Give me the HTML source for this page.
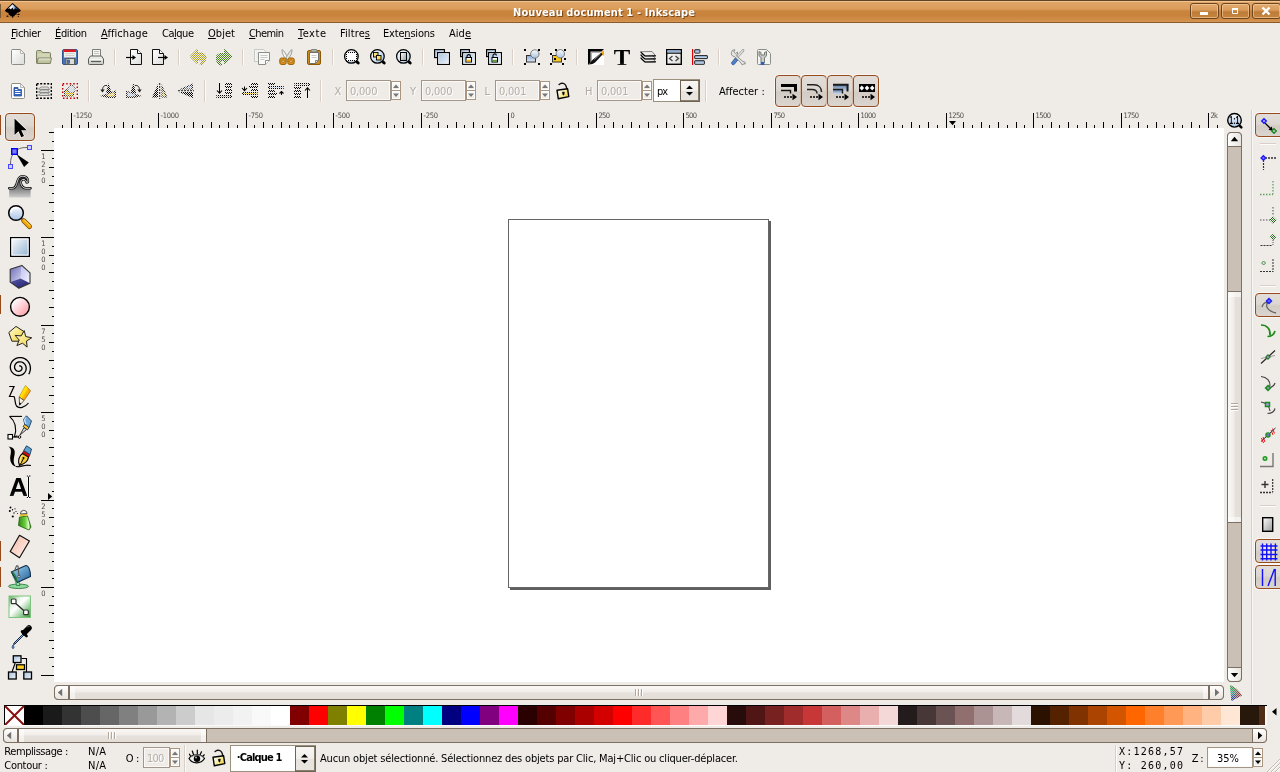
<!DOCTYPE html>
<html lang="fr"><head><meta charset="utf-8"><title>Nouveau document 1 - Inkscape</title>
<style>
html,body{margin:0;padding:0;}
body{width:1280px;height:772px;overflow:hidden;background:#efebe7;position:relative;font-family:"DejaVu Sans Condensed","DejaVu Sans","Liberation Sans",sans-serif;font-stretch:condensed;font-size:11px;}
.b{position:absolute;box-sizing:border-box;display:block;}
.t{position:absolute;white-space:nowrap;}
svg{overflow:visible;}
u{text-decoration:underline;text-underline-offset:1px;}
</style></head><body><div style="will-change:transform;position:absolute;left:0;top:0;width:1280px;height:772px;overflow:hidden">
<svg width="0" height="0" style="position:absolute"><defs>
<linearGradient id="gDoc" x1="0" y1="0" x2="1" y2="1"><stop offset="0" stop-color="#ffffff"/><stop offset="1" stop-color="#dcdcda"/></linearGradient>
<linearGradient id="gBlue" x1="0" y1="0" x2="1" y2="1"><stop offset="0" stop-color="#a9c1de"/><stop offset="1" stop-color="#eef3f9"/></linearGradient>
<linearGradient id="gBlueV" x1="0" y1="0" x2="0" y2="1"><stop offset="0" stop-color="#86a9d6"/><stop offset="1" stop-color="#dfe9f5"/></linearGradient>
<linearGradient id="gLens" x1="0" y1="0" x2="0" y2="1"><stop offset="0" stop-color="#ffffff"/><stop offset=".45" stop-color="#d5e2f2"/><stop offset="1" stop-color="#a9c4e4"/></linearGradient>
<linearGradient id="gYel" x1="0" y1="0" x2="1" y2="1"><stop offset="0" stop-color="#fff6b0"/><stop offset="1" stop-color="#f2c21a"/></linearGradient>
<linearGradient id="gFold" x1="0" y1="0" x2="0" y2="1"><stop offset="0" stop-color="#d6dabd"/><stop offset="1" stop-color="#b5ba93"/></linearGradient>
<linearGradient id="gGrayV" x1="0" y1="0" x2="0" y2="1"><stop offset="0" stop-color="#f2f2f0"/><stop offset="1" stop-color="#c9ccc5"/></linearGradient>
<linearGradient id="gPage" x1="0" y1="0" x2="1" y2="1"><stop offset="0" stop-color="#ffffff"/><stop offset="1" stop-color="#9a9a9a"/></linearGradient>
<linearGradient id="gT" x1="0" y1="0" x2="0" y2="1"><stop offset="0" stop-color="#000"/><stop offset=".7" stop-color="#000"/><stop offset="1" stop-color="#555"/></linearGradient>
<linearGradient id="gLens2" x1="0" y1="0" x2="1" y2="1"><stop offset="0" stop-color="#ffffff"/><stop offset=".5" stop-color="#d5e2f2"/><stop offset="1" stop-color="#a4c0e2"/></linearGradient>
<linearGradient id="gUl" x1="0" y1="0" x2="1" y2=".6"><stop offset="0" stop-color="#fff"/><stop offset=".35" stop-color="#fbf6d0"/><stop offset="1" stop-color="#f2d84a"/></linearGradient>
<pattern id="pChk" width="2" height="2" patternUnits="userSpaceOnUse"><rect x="0" y="0" width="1" height="1" fill="#fff"/><rect x="1" y="1" width="1" height="1" fill="#fff"/></pattern>
<mask id="mChk" maskUnits="userSpaceOnUse" x="0" y="0" width="32" height="32"><rect width="32" height="32" fill="url(#pChk)"/></mask>
</defs></svg>
<div class="b" style="left:0;top:0;width:1280px;height:23px;background:linear-gradient(#5e4425 0px,#5e4425 1px,#f3c490 1px,#f3c490 2px,#e0a566 2px,#dc9d5b 9px,#c9843e 11px,#c8823b 15px,#d2904b 21px,#d89a58 22px,#8a5a2b 22px,#8a5a2b 23px);"></div>
<div class="b" style="left:0px;top:4px;width:1px;height:14px;background:#7a5a35"></div>
<svg class="b" style="left:4px;top:2px" width="18" height="18" viewBox="0 0 18 18"><linearGradient id="gInk" x1="0" y1="0" x2="1" y2="0"><stop offset="0" stop-color="#fff"/><stop offset=".45" stop-color="#e8eef8"/><stop offset=".75" stop-color="#3a5fa0"/><stop offset="1" stop-color="#1a3a7a"/></linearGradient><path d="M8.600 1L16.800 8.300Q16.300 10.300 12.500 10.900Q8.600 11.800 4.800 10.900Q1.300 10.300 1 8.300z" fill="#000"/><path d="M8.600 2.200L3.600 6.900L5.600 6.200L6.900 7.600L8.400 5.600L9.600 7.800L11.200 6.300L14.800 8z" fill="url(#gInk)"/><path d="M4.300 10.500Q8.600 11.600 13 10.500L12.300 12.700H10.900L10.500 14.300H9.600L8.700 16.200L7.700 14.300H6.300L6 12.900H4.900z" fill="#000"/><ellipse cx="3.500" cy="14.200" rx="1.100" ry=".6" fill="#000"/><ellipse cx="14.500" cy="12.400" rx="1.100" ry=".6" fill="#000"/><ellipse cx="14.300" cy="14.500" rx=".6" ry=".6" fill="#000"/></svg>
<span id="t0" class="t" style="left:513px;top:4.69px;font-size:11px;line-height:15px;color:#fff;font-weight:bold;letter-spacing:0.110px;text-shadow:1px 1px 0 #7a4a1c;">Nouveau document 1 - Inkscape</span>
<div class="b" style="left:1190px;top:3px;width:29px;height:16px;border:1px solid #6a4520;border-radius:3px;background:linear-gradient(#e2aa6e 0,#d99c5b 6px,#bd7b38 8px,#c6853f 14px);box-shadow:inset 0 0 0 1px rgba(255,215,170,.55);"></div>
<svg class="b" style="left:1190px;top:3px" width="28" height="16" viewBox="0 0 28 16"><rect x="10" y="9" width="8" height="3" fill="#fff"/></svg>
<div class="b" style="left:1221px;top:3px;width:29px;height:16px;border:1px solid #6a4520;border-radius:3px;background:linear-gradient(#e2aa6e 0,#d99c5b 6px,#bd7b38 8px,#c6853f 14px);box-shadow:inset 0 0 0 1px rgba(255,215,170,.55);"></div>
<svg class="b" style="left:1221px;top:3px" width="28" height="16" viewBox="0 0 28 16"><path d="M11.5 5.5h5v5h-5z" fill="none" stroke="#fff" stroke-width="1"/><rect x="11" y="5" width="6" height="2" fill="#fff"/></svg>
<div class="b" style="left:1252px;top:3px;width:29px;height:16px;border:1px solid #6a4520;border-radius:3px;background:linear-gradient(#e2aa6e 0,#d99c5b 6px,#bd7b38 8px,#c6853f 14px);box-shadow:inset 0 0 0 1px rgba(255,215,170,.55);"></div>
<svg class="b" style="left:1252px;top:3px" width="28" height="16" viewBox="0 0 28 16"><path d="M10.5 4.5l7 7m0-7l-7 7" stroke="#fff" stroke-width="2.4" fill="none"/></svg>
<span id="t1" class="t" style="left:11px;top:25.69px;font-size:11px;line-height:15px;color:#000;letter-spacing:-0.380px;"><u>F</u>ichier</span>
<span id="t2" class="t" style="left:55px;top:25.69px;font-size:11px;line-height:15px;color:#000;letter-spacing:-0.378px;"><u>É</u>dition</span>
<span id="t3" class="t" style="left:101px;top:25.69px;font-size:11px;line-height:15px;color:#000;letter-spacing:0.061px;"><u>A</u>ffichage</span>
<span id="t4" class="t" style="left:162px;top:25.69px;font-size:11px;line-height:15px;color:#000;letter-spacing:-0.478px;">Ca<u>l</u>que</span>
<span id="t5" class="t" style="left:208px;top:25.69px;font-size:11px;line-height:15px;color:#000;letter-spacing:0.047px;"><u>O</u>bjet</span>
<span id="t6" class="t" style="left:249px;top:25.69px;font-size:11px;line-height:15px;color:#000;letter-spacing:-0.591px;"><u>C</u>hemin</span>
<span id="t7" class="t" style="left:298px;top:25.69px;font-size:11px;line-height:15px;color:#000;letter-spacing:0.520px;"><u>T</u>exte</span>
<span id="t8" class="t" style="left:340px;top:25.69px;font-size:11px;line-height:15px;color:#000;letter-spacing:0.109px;">Filtre<u>s</u></span>
<span id="t9" class="t" style="left:383px;top:25.69px;font-size:11px;line-height:15px;color:#000;letter-spacing:-0.194px;">Exte<u>n</u>sions</span>
<span id="t10" class="t" style="left:449px;top:25.69px;font-size:11px;line-height:15px;color:#000;letter-spacing:0.031px;">Aid<u>e</u></span>
<svg class="b" style="left:10px;top:49px" width="16" height="16" viewBox="0 0 16 16"><path d="M2 .5h8.5L14.5 4.5V14.5a1 1 0 0 1-1 1H2.500a1 1 0 0 1-1-1V1.5a1 1 0 0 1 1-1z" fill="url(#gDoc)" stroke="#8b8d88"/><path d="M10.5 .8v3.700h3.700" fill="#f4f4f2" stroke="#a8aaa5" stroke-width=".8"/></svg>
<svg class="b" style="left:36px;top:49px" width="16" height="16" viewBox="0 0 16 16"><path d="M.5 14V2.500a1 1 0 0 1 1-1H5l1.500 2H13.500a1 1 0 0 1 1 1V9" fill="#c3c8a4" stroke="#7f8266"/><path d="M1.500 4.500H13.500V9H1.500z" fill="#d2d6b6"/><path d="M.8 14.500L2.200 9H15.500L14.300 14.500z" fill="url(#gFold)" stroke="#7f8266" stroke-linejoin="round"/><path d="M3 10H14.300" stroke="#e6e9d4" stroke-width=".8"/></svg>
<svg class="b" style="left:62px;top:49px" width="16" height="16" viewBox="0 0 16 16"><rect x=".5" y=".5" width="15" height="15" rx="1.500" fill="#4b74b4" stroke="#2d5290"/><rect x="2" y="1" width="12" height="7.500" fill="#eeeeec"/><rect x="2" y=".5" width="12" height="2.500" fill="#e01b1b"/><path d="M3.500 4.500h9M3.500 6.500h9" stroke="#cfcfcc" stroke-width="1"/><rect x="4" y="9.500" width="8.500" height="6" fill="#dcdcda" stroke="#5a5c58"/><rect x="5.500" y="11" width="2" height="3.500" fill="#4b74b4" stroke="#3a3c3a" stroke-width=".6"/></svg>
<svg class="b" style="left:88px;top:49px" width="16" height="16" viewBox="0 0 16 16"><path d="M4.500 7V.5h8V7" fill="#f6f6f4" stroke="#7b7d78"/><path d="M6 2.500h5M6 4.500h5" stroke="#c3c3c0"/><path d="M2.500 7h11l2 3v4.500a1 1 0 0 1-1 1h-13a1 1 0 0 1-1-1V10z" fill="url(#gGrayV)" stroke="#5b5d58" stroke-linejoin="round"/><path d="M3 12.500h10" stroke="#5b5d58" stroke-width="1.200"/><path d="M1.500 10.500h13" stroke="#fff" stroke-opacity=".8"/></svg>
<div class="b" style="left:114px;top:49px;width:1px;height:16px;background:#d9cfc7"></div>
<div class="b" style="left:115px;top:49px;width:1px;height:16px;background:#fdfcfb"></div>
<svg class="b" style="left:126px;top:49px" width="16" height="16" viewBox="0 0 16 16"><path d="M4.500 .5h7l4 4v11h-11z" fill="url(#gDoc)" stroke="#111" stroke-linejoin="round"/><path d="M11.500 .5v4h4" fill="#fff" stroke="#111" stroke-linejoin="round"/><path d="M0 8.500h7" stroke="#000" stroke-width="1.200"/><path d="M6.500 6v5l3.500-2.500z" fill="#000"/></svg>
<svg class="b" style="left:152px;top:49px" width="16" height="16" viewBox="0 0 16 16"><path d="M.5 .5h7l4 4v11h-11z" fill="url(#gDoc)" stroke="#111" stroke-linejoin="round"/><path d="M7.500 .5v4h4" fill="#fff" stroke="#111" stroke-linejoin="round"/><path d="M6 8.500h7" stroke="#000" stroke-width="1.200"/><path d="M12.500 6v5l3.500-2.500z" fill="#000"/></svg>
<div class="b" style="left:178px;top:49px;width:1px;height:16px;background:#d9cfc7"></div>
<div class="b" style="left:179px;top:49px;width:1px;height:16px;background:#fdfcfb"></div>
<svg class="b" style="left:190px;top:49px" width="16" height="16" viewBox="0 0 16 16"><g mask="url(#mChk)"><path d="M0 7.500L7.500 0V4H12Q16 5 16 8.500Q16 12 12.500 15.500H10Q13 12.500 11 11.200Q10 10.800 7.500 11V15z" fill="#b4a428" stroke="#8c7c14" stroke-width=".8"/></g></svg>
<svg class="b" style="left:216px;top:49px" width="16" height="16" viewBox="0 0 16 16"><g mask="url(#mChk)"><path d="M16 7.500L8.500 .5V4.500H4Q0 5.500 0 9Q0 12.500 3.500 16H6Q3 13 5 11.700Q6 11.300 8.500 11.500V14.500z" fill="#4a8a1a" stroke="#2f5f10" stroke-width=".8"/></g></svg>
<div class="b" style="left:242px;top:49px;width:1px;height:16px;background:#d9cfc7"></div>
<div class="b" style="left:243px;top:49px;width:1px;height:16px;background:#fdfcfb"></div>
<svg class="b" style="left:254px;top:49px" width="16" height="16" viewBox="0 0 16 16"><path d="M.5 .5h9l2 2v10h-11z" fill="#f5f5f3" stroke="#c6c8c3"/><path d="M2.500 3h1M2.500 5h1M2.500 7h1M2.500 9h1" stroke="#d5d5d2"/><path d="M4.500 3.500h11v8l-4 4h-7z" fill="#f9f9f8" stroke="#8b8d88" stroke-linejoin="round"/><path d="M15.500 11.500h-4v4" fill="#fff" stroke="#8b8d88" stroke-linejoin="round"/><path d="M6.500 6.500h7M6.500 8.500h7M6.500 10.500h4" stroke="#c9cac6"/></svg>
<svg class="b" style="left:279px;top:49px" width="16" height="16" viewBox="0 0 16 16"><path d="M3.200 .5C2.500 3.500 4.500 7.500 7.500 10.500L9 9C7.500 5.500 5 2 3.200 .5z" fill="#f2f2f0" stroke="#888a85" stroke-width=".8"/><path d="M12.800 .5C13.500 3.500 11.500 7.500 8.500 10.500L7 9C8.500 5.500 11 2 12.800 .5z" fill="#e6e6e4" stroke="#888a85" stroke-width=".8"/><rect x=".8" y="9" width="6.400" height="6.500" rx="1.800" fill="#d9901a" stroke="#9a5d02"/><rect x="8.800" y="9" width="6.400" height="6.500" rx="1.800" fill="#d9901a" stroke="#9a5d02"/><rect x="3" y="11.200" width="2.200" height="2.200" rx=".6" fill="#f4d9a8" stroke="#9a5d02" stroke-width=".7"/><rect x="10.900" y="11.200" width="2.200" height="2.200" rx=".6" fill="#f4d9a8" stroke="#9a5d02" stroke-width=".7"/></svg>
<svg class="b" style="left:306px;top:49px" width="16" height="16" viewBox="0 0 16 16"><rect x="1.500" y="1.500" width="13" height="14" rx="1.500" fill="#c98a1e" stroke="#8f5902"/><path d="M3.500 3.500h9v8l-3 3h-6z" fill="#fdfdfc" stroke="#6e706b" stroke-linejoin="round"/><path d="M12.500 11.500h-3v3z" fill="#e4e4e2" stroke="#6e706b" stroke-width=".8"/><rect x="5" y=".5" width="6" height="2.500" rx="1" fill="#b5b7b1" stroke="#6e706b" stroke-width=".8"/><path d="M5.500 6.500h5M5.500 8.500h5" stroke="#c4c5c1" stroke-width=".9"/></svg>
<div class="b" style="left:332px;top:49px;width:1px;height:16px;background:#d9cfc7"></div>
<div class="b" style="left:333px;top:49px;width:1px;height:16px;background:#fdfcfb"></div>
<svg class="b" style="left:344px;top:49px" width="16" height="16" viewBox="0 0 16 16"><path d="M13 12.900L14.200 14" stroke="#000" stroke-width="3" stroke-linecap="round"/><circle cx="7.400" cy="7.400" r="6.800" fill="url(#gLens2)" stroke="#000" stroke-width="1.250"/><rect x="2.500" y="3.500" width="10" height="8" fill="#fff"/><path d="M2 3.500h11M2 11.500h11M2.500 3v9M12.500 3v9" fill="none" stroke="#000" stroke-width="1" stroke-dasharray="1 1"/></svg>
<svg class="b" style="left:370px;top:49px" width="16" height="16" viewBox="0 0 16 16"><path d="M13 12.900L14.200 14" stroke="#000" stroke-width="3" stroke-linecap="round"/><circle cx="7.400" cy="7.400" r="6.800" fill="url(#gLens2)" stroke="#000" stroke-width="1.250"/><rect x="3.500" y="3.500" width="4.500" height="4.500" fill="url(#gYel)" stroke="#000" stroke-width=".9"/><rect x="6.500" y="6.500" width="4.500" height="4.500" fill="url(#gYel)" stroke="#000" stroke-width=".9"/></svg>
<svg class="b" style="left:396px;top:49px" width="16" height="16" viewBox="0 0 16 16"><path d="M13 12.900L14.200 14" stroke="#000" stroke-width="3" stroke-linecap="round"/><circle cx="7.400" cy="7.400" r="6.800" fill="url(#gLens2)" stroke="#000" stroke-width="1.250"/><rect x="4.500" y="3.500" width="6" height="8" fill="url(#gPage)" stroke="#000" stroke-width="1"/></svg>
<div class="b" style="left:422px;top:49px;width:1px;height:16px;background:#d9cfc7"></div>
<div class="b" style="left:423px;top:49px;width:1px;height:16px;background:#fdfcfb"></div>
<svg class="b" style="left:434px;top:49px" width="16" height="16" viewBox="0 0 16 16"><rect x=".6" y=".6" width="9.800" height="8" fill="url(#gBlue)" stroke="#000" stroke-width="1.150"/><rect x="3.600" y="3.600" width="11.800" height="11.800" fill="url(#gBlue)" stroke="#000" stroke-width="1.150"/><rect x="4.700" y="4.700" width="9.600" height="9.600" fill="none" stroke="#fff" stroke-opacity=".7" stroke-width=".8"/></svg>
<svg class="b" style="left:460px;top:49px" width="16" height="16" viewBox="0 0 16 16"><rect x=".6" y=".6" width="8.800" height="7" fill="url(#gBlue)" stroke="#000" stroke-width="1.150"/><rect x="2.600" y="3.600" width="12.800" height="11.800" fill="url(#gBlue)" stroke="#000" stroke-width="1.150"/><rect x="3.700" y="4.700" width="10.600" height="9.600" fill="none" stroke="#fff" stroke-opacity=".7" stroke-width=".8"/><path d="M7 8.500V7.300a1.700 1.700 0 0 1 3.400 0V8.500" fill="none" stroke="#000" stroke-width="1.100"/><rect x="6" y="8.500" width="5.500" height="4.500" fill="#fff" stroke="#000" stroke-width="1"/><rect x="6.500" y="10.800" width="4.500" height="1.700" fill="#f5b800"/></svg>
<svg class="b" style="left:486px;top:49px" width="16" height="16" viewBox="0 0 16 16"><rect x=".6" y=".6" width="8.800" height="7" fill="url(#gBlue)" stroke="#000" stroke-width="1.150"/><rect x="2.600" y="3.600" width="12.800" height="11.800" fill="url(#gBlue)" stroke="#000" stroke-width="1.150"/><rect x="3.700" y="4.700" width="10.600" height="9.600" fill="none" stroke="#fff" stroke-opacity=".7" stroke-width=".8"/><path d="M7 8V6.600a1.700 1.700 0 0 1 3.400 0" fill="none" stroke="#000" stroke-width="1.100"/><rect x="6" y="8.500" width="5.500" height="4.500" fill="#fff" stroke="#000" stroke-width="1"/><rect x="6.500" y="10.800" width="4.500" height="1.700" fill="#5aa02c"/></svg>
<div class="b" style="left:512px;top:49px;width:1px;height:16px;background:#d9cfc7"></div>
<div class="b" style="left:513px;top:49px;width:1px;height:16px;background:#fdfcfb"></div>
<svg class="b" style="left:524px;top:49px" width="16" height="16" viewBox="0 0 16 16"><rect x="0" y="0" width="2" height="2" fill="#000"/><rect x="14" y="0" width="2" height="2" fill="#000"/><rect x="0" y="14" width="2" height="2" fill="#000"/><rect x="14" y="14" width="2" height="2" fill="#000"/><rect x="2.500" y="6.500" width="9" height="6.500" fill="url(#gBlueV)" stroke="#333" stroke-width="1"/><circle cx="10.800" cy="5" r="4.200" fill="url(#gLens)" stroke="#777" stroke-width="1"/></svg>
<svg class="b" style="left:550px;top:49px" width="16" height="16" viewBox="0 0 16 16"><rect x="5" y="0" width="2" height="2" fill="#000"/><rect x="14" y="0" width="2" height="2" fill="#000"/><rect x="0" y="4" width="2" height="2" fill="#000"/><rect x="14" y="9" width="2" height="2" fill="#000"/><rect x="0" y="14" width="2" height="2" fill="#000"/><rect x="12" y="14" width="2" height="2" fill="#000"/><rect x="2.500" y="6.500" width="9" height="6.500" fill="#f5c820" stroke="#333" stroke-width="1"/><rect x="4" y="9" width="2" height="2" fill="#000"/><circle cx="10.300" cy="4.800" r="4.200" fill="url(#gLens)" stroke="#777" stroke-width="1"/></svg>
<div class="b" style="left:576px;top:49px;width:1px;height:16px;background:#d9cfc7"></div>
<div class="b" style="left:577px;top:49px;width:1px;height:16px;background:#fdfcfb"></div>
<svg class="b" style="left:588px;top:49px" width="16" height="16" viewBox="0 0 16 16"><rect x="0" y="0" width="16" height="16" fill="#fff"/><path d="M0 0h16l-2.500 2.500h-11v11L0 16z" fill="#000"/><path d="M2.500 2.500h11l-1.500 1.500h-8v8l-1.500 1.500z" fill="#000" fill-opacity=".3"/><path d="M15.800 1L16 6.500 12.500 6z" fill="#f5a300"/><path d="M15.500 1L12 5l1.500 1.500z" fill="#f5a300"/><path d="M13.200 3.800L5 10.500C3 12 2 14 1 15.500 4 15.500 6.500 14.500 8 12.500L14.500 5.500z" fill="#111"/><path d="M12.500 5L6.500 10.500" stroke="#aaa" stroke-width=".8"/></svg>
<svg class="b" style="left:614px;top:49px" width="16" height="16" viewBox="0 0 16 16"><text x="8" y="15.600" font-family="'Liberation Serif','DejaVu Serif',serif" font-weight="bold" font-size="23" text-anchor="middle" fill="url(#gT)" textLength="16.500" lengthAdjust="spacingAndGlyphs">T</text></svg>
<svg class="b" style="left:640px;top:49px" width="16" height="16" viewBox="0 0 16 16"><path d="M.5 8.8L12 8.5L15.700 12.8L5 13z" fill="url(#gDoc)" stroke="#333" stroke-width=".6" stroke-linejoin="round"/><path d="M.8 9.1L5 13L15.700 12.8" fill="none" stroke="#000" stroke-width="1.200" stroke-linejoin="round"/><path d="M.5 5.8L12 5.5L15.700 9.8L5 10z" fill="url(#gDoc)" stroke="#333" stroke-width=".6" stroke-linejoin="round"/><path d="M.8 6.1L5 10L15.700 9.8" fill="none" stroke="#000" stroke-width="1.200" stroke-linejoin="round"/><path d="M.5 2.8L12 2.5L15.700 6.8L5 7z" fill="url(#gDoc)" stroke="#333" stroke-width=".6" stroke-linejoin="round"/><path d="M.8 3.1L5 7L15.700 6.8" fill="none" stroke="#000" stroke-width="1.200" stroke-linejoin="round"/></svg>
<svg class="b" style="left:666px;top:49px" width="16" height="16" viewBox="0 0 16 16"><rect x=".7" y=".7" width="14.600" height="14.600" fill="url(#gDoc)" stroke="#000" stroke-width="1.400"/><rect x="1.500" y="1.500" width="13" height="2" fill="#8db0de"/><path d="M.7 4.200h14.600" stroke="#000" stroke-width="1.100"/><path d="M6.500 7L3.500 9.500l3 2.500M9.500 7l3 2.500-3 2.500" fill="none" stroke="#444" stroke-width="1.300"/></svg>
<svg class="b" style="left:692px;top:49px" width="16" height="16" viewBox="0 0 16 16"><path d="M.6 0v16" stroke="#e00000" stroke-width="1.200"/><rect x="2.700" y=".7" width="5.200" height="3.400" rx=".4" fill="url(#gBlueV)" stroke="#222"/><rect x="2.700" y="6.600" width="12.700" height="3" rx=".4" fill="url(#gBlueV)" stroke="#222"/><rect x="2.700" y="11.700" width="9.700" height="3.600" rx=".4" fill="url(#gBlueV)" stroke="#222"/></svg>
<div class="b" style="left:718px;top:49px;width:1px;height:16px;background:#d9cfc7"></div>
<div class="b" style="left:719px;top:49px;width:1px;height:16px;background:#fdfcfb"></div>
<svg class="b" style="left:730px;top:49px" width="16" height="16" viewBox="0 0 16 16"><path d="M13 1.500L5 10.500" stroke="#8b8d88" stroke-width="2.600" stroke-linecap="round"/><path d="M13 1.500L5 10.500" stroke="#e8e8e6" stroke-width="1.200" stroke-linecap="round"/><path d="M5.500 9L2 13a1.600 1.600 0 0 0 2.400 2.200L7.800 11z" fill="#4f7fc9" stroke="#2c559a" stroke-width=".8"/><path d="M1.500 3.500A3 3 0 0 1 5 .8L3.800 3l1.700 1.500L7.500 3A3 3 0 0 1 6 6.500L13 12.500A2.200 2.200 0 0 1 15.300 15l-1.500-.3-.8 1.200A2.200 2.200 0 0 1 11 13.800L4.500 7.500A3 3 0 0 1 1.500 3.500z" fill="#e6e6e4" stroke="#7b7d78" stroke-width=".8"/></svg>
<svg class="b" style="left:756px;top:49px" width="16" height="16" viewBox="0 0 16 16"><path d="M2.500 .5h8l4 4v10a1 1 0 0 1-1 1h-11a1 1 0 0 1-1-1v-13a1 1 0 0 1 1-1z" fill="#f3f3f1" stroke="#8b8d88"/><path d="M3 2.500V6c0 1.500 1.300 2 2 2.600V13.500h3.500V8.600C9.500 8 10.500 7.500 10.500 6V2.500L8.500 3.500V6H5V3.500z" fill="#c9cbc6" stroke="#6e706b" stroke-width=".9" stroke-linejoin="round"/><rect x="4.700" y="13" width="3.600" height="3" fill="#2f5fb3"/></svg>
<svg class="b" style="left:10px;top:83px" width="16" height="16" viewBox="0 0 16 16"><path d="M2 .5h8.500L14.500 4.500V14.500a1 1 0 0 1-1 1H2.500a1 1 0 0 1-1-1V1.500a1 1 0 0 1 1-1z" fill="#fff" stroke="#8b8d88"/><path d="M10.500 .8v3.700h3.700" fill="#f4f4f2" stroke="#a8aaa5" stroke-width=".8"/><path d="M4 4.500h4v2h3.500v6.500H4z" fill="#3465c0" stroke="#2a50a0" stroke-width=".8"/><path d="M5 6.500h2.500M5 8.500h5.500M5 10.500h5.500" stroke="#fff" stroke-width="1"/></svg>
<svg class="b" style="left:36px;top:83px" width="16" height="16" viewBox="0 0 16 16"><rect x=".7" y=".7" width="14.600" height="14.600" fill="none" stroke="#000" stroke-width="1.400" stroke-dasharray="2 1.500"/><path d="M2.500 12L5 10H12L13.500 12.5H5z" fill="url(#gGrayV)" stroke="#777" stroke-width=".8" stroke-linejoin="round"/><path d="M2.500 9L5 7H12L13.500 9.5H5z" fill="url(#gGrayV)" stroke="#777" stroke-width=".8" stroke-linejoin="round"/><path d="M2.500 6L5 4H12L13.500 6.5H5z" fill="url(#gGrayV)" stroke="#777" stroke-width=".8" stroke-linejoin="round"/></svg>
<svg class="b" style="left:62px;top:83px" width="16" height="16" viewBox="0 0 16 16"><rect x=".7" y=".7" width="14.600" height="14.600" fill="none" stroke="#c00000" stroke-width="1.400" stroke-dasharray="1.500 2"/><g mask="url(#mChk)"><path d="M2.500 13V8l2-1.500 2 1.500h5V13z" fill="#d4aa00" stroke="#222" stroke-width="1"/><circle cx="9.500" cy="6" r="3.800" fill="#c8d4e4" stroke="#555" stroke-width="1"/></g></svg>
<div class="b" style="left:88px;top:80px;width:1px;height:22px;background:#d9cfc7"></div>
<div class="b" style="left:89px;top:80px;width:1px;height:22px;background:#fdfcfb"></div>
<svg class="b" style="left:100px;top:83px" width="16" height="16" viewBox="0 0 16 16"><g mask="url(#mChk)"><path d="M8.500 0L11.500 10H6z" fill="#000"/><path d="M0 13L16 7.500V15H8z" fill="#222"/><path d="M6 12L14.500 9V13.500H9z" fill="#e8c860"/></g><path d="M7 2.500C3.500 2 2.500 4.500 2.500 7.500" fill="none" stroke="#222" stroke-width="1"/><path d="M.3 6.500h4.400L2.500 9.500z" fill="#222"/></svg>
<svg class="b" style="left:126px;top:83px" width="16" height="16" viewBox="0 0 16 16"><g mask="url(#mChk)"><path d="M7.500 0L4.500 10H10z" fill="#000"/><path d="M16 13L0 7.500V15H8z" fill="#222"/><path d="M1.500 9L10 12 7 13.500H1.500z" fill="#b8cce4"/></g><path d="M9 2.500C12.500 2 13.500 4.500 13.500 7.500" fill="none" stroke="#222" stroke-width="1"/><path d="M15.700 6.500h-4.400L13.500 9.500z" fill="#222"/></svg>
<svg class="b" style="left:152px;top:83px" width="16" height="16" viewBox="0 0 16 16"><g mask="url(#mChk)"><path d="M6 1L0 14.500H6z" fill="#000"/><path d="M9.500 1L15.500 14.500H9.500z" fill="#222"/><path d="M10.500 6L13.500 13.500H10.500z" fill="#e8c860"/></g><path d="M7.700 0V16" stroke="#222" stroke-width="1" stroke-dasharray="2 1"/></svg>
<svg class="b" style="left:178px;top:83px" width="16" height="16" viewBox="0 0 16 16"><g mask="url(#mChk)"><path d="M15 .5L1 6.500H15z" fill="#222"/><path d="M13.500 2.500L6 5.500H13.500z" fill="#b8cce4"/><path d="M15 15L1 9H15z" fill="#000"/></g><path d="M0 7.700H16" stroke="#222" stroke-width="1" stroke-dasharray="2 1"/></svg>
<div class="b" style="left:204px;top:80px;width:1px;height:22px;background:#d9cfc7"></div>
<div class="b" style="left:205px;top:80px;width:1px;height:22px;background:#fdfcfb"></div>
<svg class="b" style="left:216px;top:83px" width="16" height="16" viewBox="0 0 16 16"><g mask="url(#mChk)"><rect x="9" y="0" width="7" height="2" fill="#000"/><rect x="9" y="3" width="7" height="2" fill="#000"/><rect x="9" y="6" width="7" height="2" fill="#000"/><rect x="9" y="9" width="7" height="2" fill="#000"/><rect x="0" y="12" width="16" height="3" rx="1.200" fill="#000"/><rect x="1" y="13" width="14" height="1" fill="#d9b43c"/></g><path d="M3.5 0V10.0" stroke="#000" stroke-width="1"/><path d="M1.0 7.5L3.5 10.2L6.0 7.5" fill="none" stroke="#000" stroke-width="1.100"/></svg>
<svg class="b" style="left:242px;top:83px" width="16" height="16" viewBox="0 0 16 16"><g mask="url(#mChk)"><rect x="9" y="0" width="7" height="2" fill="#000"/><rect x="7" y="3" width="9" height="2" fill="#000"/><rect x="9" y="6" width="7" height="2" fill="#000"/><rect x="0" y="9" width="16" height="3" rx="1.200" fill="#000"/><rect x="1" y="10" width="14" height="1" fill="#d9b43c"/><rect x="9" y="13" width="7" height="2" fill="#000"/></g><path d="M2.5 3.5V7.5" stroke="#000" stroke-width="1"/><path d="M0.0 5L2.5 7.7L5.0 5" fill="none" stroke="#000" stroke-width="1.100"/></svg>
<svg class="b" style="left:268px;top:83px" width="16" height="16" viewBox="0 0 16 16"><g mask="url(#mChk)"><rect x="0" y="0" width="7" height="2" fill="#000"/><rect x="0" y="3" width="16" height="3" rx="1.200" fill="#000"/><rect x="1" y="4" width="14" height="1" fill="#c8d4e4"/><rect x="0" y="7" width="7" height="2" fill="#000"/><rect x="0" y="10" width="9" height="2" fill="#000"/><rect x="0" y="13" width="7" height="2" fill="#000"/></g><path d="M11.500 10.500L13.500 8.500L15.500 10.500" fill="none" stroke="#000" stroke-width="1.100"/><path d="M13.500 9v3" stroke="#000"/></svg>
<svg class="b" style="left:294px;top:83px" width="16" height="16" viewBox="0 0 16 16"><g mask="url(#mChk)"><rect x="0" y="0" width="16" height="3" rx="1.200" fill="#000"/><rect x="1" y="1" width="14" height="1" fill="#c8d4e4"/><rect x="0" y="4" width="7" height="2" fill="#000"/><rect x="0" y="7" width="7" height="2" fill="#000"/><rect x="0" y="10" width="7" height="2" fill="#000"/><rect x="0" y="13" width="7" height="2" fill="#000"/></g><path d="M13.5 5.0V15" stroke="#000" stroke-width="1"/><path d="M11.0 7.5L13.5 4.8L16.0 7.5" fill="none" stroke="#000" stroke-width="1.100"/></svg>
<div class="b" style="left:320px;top:80px;width:1px;height:22px;background:#d9cfc7"></div>
<div class="b" style="left:321px;top:80px;width:1px;height:22px;background:#fdfcfb"></div>
<span id="t11" class="t" style="left:334.5px;top:83.69px;font-size:11px;line-height:15px;color:#b0aaa3;letter-spacing:0.000px;text-shadow:1px 1px 0 #fff;">X</span>
<div class="b" style="left:346px;top:80px;width:45px;height:21px;border:1px solid #a0978a;background:#efebe7;box-shadow:inset 0 0 0 1px #fbfaf8;"></div>
<span id="t12" class="t" style="left:350px;top:83.69px;font-size:11px;line-height:15px;color:#b5afa8;letter-spacing:-0.207px;text-shadow:1px 1px 0 #fff;">0,000</span>
<div class="b" style="left:391px;top:81px;width:10px;height:10px;border:1px solid #ab957f;background:linear-gradient(#fdfcfb,#ece8e3);box-shadow:inset 0 0 0 1px #fff;"></div>
<div class="b" style="left:391px;top:90px;width:10px;height:10px;border:1px solid #ab957f;background:linear-gradient(#fdfcfb,#ece8e3);box-shadow:inset 0 0 0 1px #fff;"></div>
<svg class="b" style="left:391px;top:81px" width="10" height="19" viewBox="0 0 10 19"><path d="M2 7L5 3.5L8 7z M2 12.5L5 16L8 12.5z" fill="#777"/></svg>
<span id="t13" class="t" style="left:410px;top:83.69px;font-size:11px;line-height:15px;color:#b0aaa3;letter-spacing:0.000px;text-shadow:1px 1px 0 #fff;">Y</span>
<div class="b" style="left:421px;top:80px;width:45px;height:21px;border:1px solid #a0978a;background:#efebe7;box-shadow:inset 0 0 0 1px #fbfaf8;"></div>
<span id="t14" class="t" style="left:425px;top:83.69px;font-size:11px;line-height:15px;color:#b5afa8;letter-spacing:-0.207px;text-shadow:1px 1px 0 #fff;">0,000</span>
<div class="b" style="left:466px;top:81px;width:10px;height:10px;border:1px solid #ab957f;background:linear-gradient(#fdfcfb,#ece8e3);box-shadow:inset 0 0 0 1px #fff;"></div>
<div class="b" style="left:466px;top:90px;width:10px;height:10px;border:1px solid #ab957f;background:linear-gradient(#fdfcfb,#ece8e3);box-shadow:inset 0 0 0 1px #fff;"></div>
<svg class="b" style="left:466px;top:81px" width="10" height="19" viewBox="0 0 10 19"><path d="M2 7L5 3.5L8 7z M2 12.5L5 16L8 12.5z" fill="#777"/></svg>
<span id="t15" class="t" style="left:484.5px;top:83.69px;font-size:11px;line-height:15px;color:#b0aaa3;letter-spacing:0.000px;text-shadow:1px 1px 0 #fff;">L</span>
<div class="b" style="left:495px;top:80px;width:45px;height:21px;border:1px solid #a0978a;background:#efebe7;box-shadow:inset 0 0 0 1px #fbfaf8;"></div>
<span id="t16" class="t" style="left:499px;top:83.69px;font-size:11px;line-height:15px;color:#b5afa8;letter-spacing:-0.207px;text-shadow:1px 1px 0 #fff;">0,001</span>
<div class="b" style="left:540px;top:81px;width:10px;height:10px;border:1px solid #ab957f;background:linear-gradient(#fdfcfb,#ece8e3);box-shadow:inset 0 0 0 1px #fff;"></div>
<div class="b" style="left:540px;top:90px;width:10px;height:10px;border:1px solid #ab957f;background:linear-gradient(#fdfcfb,#ece8e3);box-shadow:inset 0 0 0 1px #fff;"></div>
<svg class="b" style="left:540px;top:81px" width="10" height="19" viewBox="0 0 10 19"><path d="M2 7L5 3.5L8 7z M2 12.5L5 16L8 12.5z" fill="#777"/></svg>
<span id="t17" class="t" style="left:585px;top:83.69px;font-size:11px;line-height:15px;color:#b0aaa3;letter-spacing:0.000px;text-shadow:1px 1px 0 #fff;">H</span>
<div class="b" style="left:597px;top:80px;width:45px;height:21px;border:1px solid #a0978a;background:#efebe7;box-shadow:inset 0 0 0 1px #fbfaf8;"></div>
<span id="t18" class="t" style="left:601px;top:83.69px;font-size:11px;line-height:15px;color:#b5afa8;letter-spacing:-0.207px;text-shadow:1px 1px 0 #fff;">0,001</span>
<div class="b" style="left:642px;top:81px;width:10px;height:10px;border:1px solid #ab957f;background:linear-gradient(#fdfcfb,#ece8e3);box-shadow:inset 0 0 0 1px #fff;"></div>
<div class="b" style="left:642px;top:90px;width:10px;height:10px;border:1px solid #ab957f;background:linear-gradient(#fdfcfb,#ece8e3);box-shadow:inset 0 0 0 1px #fff;"></div>
<svg class="b" style="left:642px;top:81px" width="10" height="19" viewBox="0 0 10 19"><path d="M2 7L5 3.5L8 7z M2 12.5L5 16L8 12.5z" fill="#777"/></svg>
<svg class="b" style="left:555px;top:83px" width="16" height="16" viewBox="0 0 16 16"><path d="M4 1.600C6 -.6 10.800 -.8 11.800 5.800" fill="none" stroke="#111" stroke-width="1.400" stroke-linecap="round"/><path d="M2 7.200L12.600 5.800L13.800 13.600L3.300 15.800z" fill="url(#gUl)" stroke="#000" stroke-width="1.400" stroke-linejoin="round"/><path d="M7.300 9.300L9.300 9L8.900 12L8 11.800z" fill="#000" stroke="#000" stroke-width=".6"/></svg>
<div class="b" style="left:653px;top:79px;width:47px;height:23px;border:1px solid #9a917f;background:#fff;"></div>
<div class="b" style="left:680px;top:80px;width:20px;height:22px;border:1px solid #6f6453;box-shadow:inset -1px -1px 0 #8a7f6e;background:linear-gradient(#f8f6f3,#f1eeea 50%,#e8e3dd 52%,#e9e5df);"></div>
<svg class="b" style="left:680px;top:80px" width="20" height="22" viewBox="0 0 20 22"><path d="M6 9l3.500-3.500L13 9z M6 12l3.500 3.500L13 12z" fill="#000"/></svg>
<span id="t19" class="t" style="left:657px;top:83.69px;font-size:11px;line-height:15px;color:#000;letter-spacing:-1.141px;">px</span>
<div class="b" style="left:705px;top:80px;width:1px;height:22px;background:#d9cfc7"></div>
<div class="b" style="left:706px;top:80px;width:1px;height:22px;background:#fdfcfb"></div>
<span id="t20" class="t" style="left:719px;top:83.69px;font-size:11px;line-height:15px;color:#000;letter-spacing:0.040px;">Affecter :</span>
<div class="b" style="left:775px;top:75px;width:26px;height:32px;border:1px solid #964b1c;border-radius:4px;background:linear-gradient(#e2ddd8 0%,#ddd7d1 45%,#d3ccc5 55%,#dbd5cf 100%);box-shadow:0 0 0 1px rgba(255,255,255,.6);"></div>
<svg class="b" style="left:780px;top:83px" width="18" height="18" viewBox="0 0 18 18"><path d="M1 2.500H15.500V8.500" fill="none" stroke="#000" stroke-width="3"/><path d="M1 7.500H10.500V10.500" fill="none" stroke="#111" stroke-width="1.400"/><path d="M4 14H13" stroke="#000" stroke-width="1.300" stroke-dasharray="2 1"/><path d="M12.500 10.8L17 14L12.500 17.2z" fill="#000"/></svg>
<div class="b" style="left:801px;top:75px;width:26px;height:32px;border:1px solid #964b1c;border-radius:4px;background:linear-gradient(#e2ddd8 0%,#ddd7d1 45%,#d3ccc5 55%,#dbd5cf 100%);box-shadow:0 0 0 1px rgba(255,255,255,.6);"></div>
<svg class="b" style="left:806px;top:83px" width="18" height="18" viewBox="0 0 18 18"><path d="M1 1.800H8C13 1.800 15.500 5 15.500 9" fill="none" stroke="#222" stroke-width="1.500"/><path d="M1 6.500H6C9.500 6.500 11 8.500 11 10.500" fill="none" stroke="#222" stroke-width="1.500"/><path d="M4 14H13" stroke="#000" stroke-width="1.300" stroke-dasharray="2 1"/><path d="M12.500 10.8L17 14L12.500 17.2z" fill="#000"/></svg>
<div class="b" style="left:827px;top:75px;width:26px;height:32px;border:1px solid #964b1c;border-radius:4px;background:linear-gradient(#e2ddd8 0%,#ddd7d1 45%,#d3ccc5 55%,#dbd5cf 100%);box-shadow:0 0 0 1px rgba(255,255,255,.6);"></div>
<svg class="b" style="left:832px;top:83px" width="18" height="18" viewBox="0 0 18 18"><linearGradient id="gA3" x1="0" y1="0" x2="0" y2="1"><stop offset="0" stop-color="#4d6f9e"/><stop offset="1" stop-color="#cddcee"/></linearGradient><rect x="1" y="1" width="15.500" height="7.500" fill="url(#gA3)"/><rect x="1" y="6" width="9" height="5" fill="url(#gA3)"/><path d="M1 1.800H15.500V8.500" fill="none" stroke="#1a1a1a" stroke-width="2"/><path d="M1 6.500H10.500V10.500" fill="none" stroke="#1a1a1a" stroke-width="1.400"/><path d="M4 14H13" stroke="#000" stroke-width="1.300" stroke-dasharray="2 1"/><path d="M12.500 10.8L17 14L12.500 17.2z" fill="#000"/></svg>
<div class="b" style="left:853px;top:75px;width:26px;height:32px;border:1px solid #964b1c;border-radius:4px;background:linear-gradient(#e2ddd8 0%,#ddd7d1 45%,#d3ccc5 55%,#dbd5cf 100%);box-shadow:0 0 0 1px rgba(255,255,255,.6);"></div>
<svg class="b" style="left:858px;top:83px" width="18" height="18" viewBox="0 0 18 18"><rect x="1" y="1" width="16" height="8" fill="#000"/><path d="M1.5 5l2.300-2.500 2.300 2.500-2.300 2.500z" fill="#fff"/><path d="M6.7 5l2.300-2.500 2.300 2.500-2.300 2.500z" fill="#fff"/><path d="M11.9 5l2.300-2.500 2.300 2.500-2.300 2.500z" fill="#fff"/><path d="M4 14H13" stroke="#000" stroke-width="1.300" stroke-dasharray="2 1"/><path d="M12.500 10.8L17 14L12.500 17.2z" fill="#000"/></svg>
<div class="b" style="left:5px;top:113px;width:30px;height:28px;border:1px solid #964b1c;border-radius:4px;background:linear-gradient(#e2ddd8 0%,#ddd7d1 45%,#d3ccc5 55%,#dbd5cf 100%);box-shadow:0 0 0 1px rgba(255,255,255,.6);"></div>
<svg class="b" style="left:7px;top:115px" width="24" height="24" viewBox="0 0 24 24"><path d="M7.500 3.500V20L11.500 16.200L14.300 22.300L17 21L14.200 15.200H19.800z" fill="#000" stroke="#fff" stroke-width="1.200" stroke-linejoin="round"/><path d="M7.500 3.500V20L11.500 16.200L14.300 22.300L17 21L14.200 15.200H19.800z" fill="#000"/></svg>
<svg class="b" style="left:7px;top:145px" width="24" height="24" viewBox="0 0 24 24"><path d="M3.500 19C3.500 14 4.500 11 6 9.500M10.500 4.500C13 3 16 2.500 20 2.500" fill="none" stroke="#666" stroke-width="1"/><rect x="4.700" y="3.700" width="5.600" height="5.600" fill="#7b7be6" stroke="#0000ff" stroke-width="1.400"/><rect x="20.500" y=".5" width="4" height="4" fill="#d0d0ff" stroke="#4848ff"/><rect x="1.500" y="19.500" width="4" height="4" fill="#d0d0ff" stroke="#4848ff"/><path d="M9.600 9.200L21.800 17.400L17.100 22z" fill="#000"/></svg>
<svg class="b" style="left:7px;top:175px" width="24" height="24" viewBox="0 0 24 24"><linearGradient id="gTw" x1="0" y1="0" x2="0" y2="1"><stop offset="0" stop-color="#333"/><stop offset=".55" stop-color="#7c7c7c"/><stop offset="1" stop-color="#cfcfcf"/></linearGradient><path d="M2.200 13.300H5.500C9 13.300 9.500 9 10.500 6C11.500 2.500 13 1.200 16 1.200C19 1.200 21 3.500 21 6C21 7.500 20.300 7.800 19.600 7.400C19.500 5.500 17.500 4 15.500 4.500C13.500 5.200 13.500 7.500 14 9C14.800 11.500 16 13.300 19 13.300H23.600V22.600H2.200z" fill="url(#gTw)"/><path d="M2.200 13.300H5.500C9 13.300 9.500 9 10.500 6C11.500 2.500 13 1.200 16 1.200C19 1.200 21 3.500 21 6C21 7.500 20.300 7.800 19.600 7.400C19.500 5.500 17.500 4 15.500 4.500C13.500 5.200 13.500 7.500 14 9C14.800 11.500 16 13.300 19 13.300H23.600" fill="none" stroke="#111" stroke-width="2.400" stroke-linecap="round"/><path d="M2.200 13.300H5.500C9 13.300 9.500 9 10.500 6C11.500 2.500 13 1.200 16 1.200C19 1.200 21 3.500 21 6C21 7.500 20.300 7.800 19.600 7.400C19.500 5.500 17.500 4 15.500 4.500C13.500 5.200 13.500 7.500 14 9C14.800 11.500 16 13.300 19 13.300H23.600" fill="none" stroke="#fff" stroke-width=".8"/></svg>
<svg class="b" style="left:7px;top:205px" width="24" height="24" viewBox="0 0 24 24"><linearGradient id="gZh" x1="0" y1="0" x2="1" y2="0"><stop offset="0" stop-color="#ffd24a"/><stop offset="1" stop-color="#e89200"/></linearGradient><path d="M14.500 13.500L17 16" stroke="#888" stroke-width="3.200"/><path d="M16.800 15.800L22.500 21.500" stroke="#7a4a00" stroke-width="5" stroke-linecap="round"/><path d="M16.800 15.800L22.500 21.500" stroke="#f5a800" stroke-width="3.400" stroke-linecap="round"/><path d="M17.300 15L23 20.700" stroke="#ffe27a" stroke-width="1" stroke-linecap="round"/><circle cx="9" cy="8" r="7.300" fill="url(#gLens)" stroke="#000" stroke-width="1.500"/><path d="M4 7A5 5 0 0 1 10 3" fill="none" stroke="#fff" stroke-width="1.500" stroke-linecap="round"/></svg>
<svg class="b" style="left:7px;top:235px" width="24" height="24" viewBox="0 0 24 24"><rect x="3.700" y="2.700" width="18.600" height="18.600" fill="url(#gRc)" stroke="#000" stroke-width="1.400"/><rect x="4.900" y="3.900" width="16.200" height="16.200" fill="none" stroke="#fff" stroke-width="1"/><linearGradient id="gRc" x1="0" y1="0" x2="1" y2="1"><stop offset="0" stop-color="#fff"/><stop offset="1" stop-color="#8fb0cf"/></linearGradient></svg>
<svg class="b" style="left:7px;top:265px" width="24" height="24" viewBox="0 0 24 24"><linearGradient id="gB1" x1="0" y1="0" x2="1" y2="1"><stop offset="0" stop-color="#6a6ab8"/><stop offset="1" stop-color="#d4d4f0"/></linearGradient><linearGradient id="gB2" x1="0" y1="0" x2="1" y2="1"><stop offset="0" stop-color="#c0c0ee"/><stop offset="1" stop-color="#f4f4ff"/></linearGradient><linearGradient id="gB3" x1="0" y1="0" x2="1" y2="1"><stop offset="0" stop-color="#5a5aaa"/><stop offset="1" stop-color="#1c1c6c"/></linearGradient><path d="M3.200 4.300L14.800 .4L13.600 13.600L3.200 17.100z" fill="url(#gB1)"/><path d="M14.800 .4L23 7.800V18.300L13.600 13.600z" fill="url(#gB2)"/><path d="M3.200 17.100L13.600 13.600L23 18.300L11.900 23.200z" fill="url(#gB3)"/><path d="M3.200 4.300L14.800 .4L23 7.800V18.300L11.900 23.200L3.200 17.100z" fill="none" stroke="#333" stroke-width="1.100" stroke-linejoin="round"/></svg>
<svg class="b" style="left:7px;top:295px" width="24" height="24" viewBox="0 0 24 24"><linearGradient id="gEl" x1="0.150" y1="0.150" x2=".85" y2=".85"><stop offset="0" stop-color="#fff"/><stop offset="1" stop-color="#ffa4ae"/></linearGradient><circle cx="13" cy="11.800" r="9.400" fill="url(#gEl)" stroke="#000" stroke-width="1.400"/></svg>
<svg class="b" style="left:7px;top:325px" width="24" height="24" viewBox="0 0 24 24"><linearGradient id="gSt" x1="0" y1="0" x2="1" y2="1"><stop offset="0" stop-color="#fffde0"/><stop offset="1" stop-color="#f0d030"/></linearGradient><path d="M9 1.400L1.800 7.500L4.900 16.200H14L16.600 6.300z" fill="url(#gSt)" stroke="#222" stroke-width="1" stroke-linejoin="round"/><path d="M17.2 5.6L18.7 11.5L24.7 12.8L19.5 16.0L20.1 22.1L15.5 18.2L9.9 20.6L12.2 15.0L8.1 10.4L14.2 10.9z" fill="url(#gSt)" stroke="#222" stroke-width="1" stroke-linejoin="round"/></svg>
<svg class="b" style="left:7px;top:355px" width="24" height="24" viewBox="0 0 24 24"><path d="M12.3 11.1L12.5 11.0L12.7 11.0L12.9 11.0L13.1 11.0L13.4 11.0L13.6 11.1L13.9 11.2L14.1 11.4L14.3 11.6L14.5 11.8L14.7 12.0L14.8 12.3L14.9 12.6L14.9 13.0L15.0 13.3L14.9 13.7L14.9 14.0L14.7 14.4L14.6 14.7L14.3 15.0L14.1 15.3L13.8 15.6L13.4 15.8L13.0 16.0L12.6 16.2L12.2 16.3L11.7 16.3L11.2 16.3L10.7 16.2L10.3 16.0L9.8 15.8L9.4 15.6L9.0 15.2L8.6 14.9L8.3 14.4L8.0 13.9L7.8 13.4L7.6 12.9L7.6 12.3L7.6 11.7L7.6 11.1L7.8 10.5L8.0 9.9L8.3 9.3L8.7 8.8L9.1 8.3L9.6 7.9L10.2 7.5L10.8 7.2L11.5 7.0L12.2 6.9L12.9 6.8L13.6 6.8L14.3 7.0L15.0 7.2L15.7 7.5L16.4 7.9L17.0 8.4L17.6 8.9L18.0 9.5L18.4 10.2L18.8 11.0L19.0 11.8L19.1 12.6L19.2 13.5L19.1 14.3L18.9 15.2L18.6 16.0L18.2 16.8L17.7 17.6L17.1 18.2L16.4 18.9L15.7 19.4L14.8 19.8L13.9 20.2L13.0 20.4L12.0 20.5L11.1 20.5L10.1 20.4L9.1 20.1L8.2 19.7L7.3 19.2L6.4 18.6L5.7 17.9L5.0 17.1L4.4 16.2L4.0 15.3L3.6 14.2L3.4 13.2L3.3 12.1L3.4 10.9L3.6 9.8L3.9 8.7L4.4 7.7L5.0 6.7L5.7 5.8L6.5 5.0L7.5 4.2L8.5 3.6L9.6 3.1L10.8 2.8L12.0 2.6L13.2 2.6L14.4 2.7L15.7 2.9L16.9 3.3L18.0 3.9L19.1 4.6L20.1 5.4L21.0 6.4L21.8 7.5L22.4 8.6L22.9 9.9L23.2 11.2L23.4 12.6L23.4 13.9L23.2 15.3L22.9 16.6L22.4 18.0L21.7 19.2" fill="none" stroke="#000" stroke-width="1.300"/></svg>
<svg class="b" style="left:7px;top:385px" width="24" height="24" viewBox="0 0 24 24"><path d="M2.200 1.500H7L2.500 11.500H7C8.500 14 7.500 18 9.500 21C12 24 18 22.500 21.500 18" fill="none" stroke="#000" stroke-width="1.200"/><path d="M18.500 .6L23.600 5.800L17 15.500L12.200 12z" fill="#ffb000" stroke="#6a4a00" stroke-width=".6"/><path d="M18.500 .6L21 3.200L14.600 13.700L12.200 12z" fill="#ffe000"/><path d="M12.200 12L17 15.500L12.600 20.200z" fill="#fff4dc" stroke="#333" stroke-width=".8"/><path d="M12.300 17.300L14.200 18.600L12.500 20.500z" fill="#000"/></svg>
<svg class="b" style="left:7px;top:415px" width="24" height="24" viewBox="0 0 24 24"><path d="M2.600 1.400H15" stroke="#000" stroke-width="1.100"/><path d="M2.600 1.400C9 7 9.500 15 7.500 21.500C8.500 22 9.500 21.500 10.200 20.500" fill="none" stroke="#000" stroke-width="1.100"/><path d="M5 22H12" stroke="#000" stroke-width="1.100"/><rect x="1" y="19.500" width="4.500" height="4.500" fill="#fff" stroke="#000" stroke-width="1.100"/><circle cx="12.500" cy="22" r="1.300" fill="#fff" stroke="#000" stroke-width="1"/><path d="M13 20L17 12.500L19.500 14.500z" fill="#ddd" stroke="#222" stroke-width=".9"/><path d="M16.200 11.500L20.500 14.800L22 12.500L17.800 9.200z" fill="#ffd030" stroke="#222" stroke-width=".9"/><path d="M17.800 9.200L22 12.500L24.500 6L19.500 .8L16.500 4.500z" fill="#6fa8d8" stroke="#1a3a5a" stroke-width=".9" stroke-linejoin="round"/><path d="M19 2.500L17.300 5L19 9" fill="none" stroke="#c8e4ff" stroke-width="1.300"/></svg>
<svg class="b" style="left:7px;top:445px" width="24" height="24" viewBox="0 0 24 24"><path d="M1.500 1.500C7 2.500 8.500 5 7.500 10C6.500 15 6 18.500 9 21.500C7 21.500 3.500 19 3.200 14C3 9 6 5 1.500 1.500z" fill="#000"/><path d="M9 21.500C13 23 16.500 19.500 24 20.500C19 19 14 22 9 21.500z" fill="#000" stroke="#000" stroke-width=".8"/><path d="M12.500 20.500C10.500 16 12 11 15.500 8.500L21.500 12C21 16 17.500 19 12.500 20.500z" fill="#f6c832" stroke="#000" stroke-width="1.200" stroke-linejoin="round"/><path d="M13 20L16.500 13.500" stroke="#000" stroke-width="1"/><circle cx="16.500" cy="13" r="1" fill="#000"/><path d="M13.200 18C12.500 15 13.500 12 15.500 10" fill="none" stroke="#fff3b0" stroke-width="1"/><path d="M15.500 8L22 12L23 9.500L16.800 5.500z" fill="#d01010" stroke="#300" stroke-width=".6"/><path d="M16.800 5.500L23 9.500L24.500 4L19.500 .8z" fill="#5f9fd0" stroke="#1a3a5a" stroke-width=".9" stroke-linejoin="round"/></svg>
<svg class="b" style="left:7px;top:475px" width="24" height="24" viewBox="0 0 24 24"><text x="11.600" y="20.800" font-family="'Liberation Sans','DejaVu Sans',sans-serif" font-weight="bold" font-size="26" text-anchor="middle" fill="url(#gT)" textLength="19" lengthAdjust="spacingAndGlyphs">A</text><path d="M21.500 1.500V22M19.500 1h4.500M19.500 22.500h4.500" stroke="#fff" stroke-width="2.200"/><path d="M21.500 1.500V22M19.800 1h1.200M22 1h1.500M19.800 22.500h1.200M22 22.500h1.500" stroke="#000" stroke-width="1"/></svg>
<svg class="b" style="left:7px;top:505px" width="24" height="24" viewBox="0 0 24 24"><linearGradient id="gSp" x1="0" y1="0" x2="1" y2="0"><stop offset="0" stop-color="#2f8a12"/><stop offset=".55" stop-color="#6fd040"/><stop offset=".8" stop-color="#d8ffc0"/><stop offset="1" stop-color="#2f8a12"/></linearGradient><circle cx="3.5" cy="2.5" r="0.9" fill="#000"/><circle cx="2.8" cy="6" r="1" fill="#000"/><circle cx="5.5" cy="4.8" r="0.7" fill="#000"/><circle cx="5.8" cy="11.5" r="1.1" fill="#000"/><circle cx="7" cy="8" r="0.7" fill="#000"/><circle cx="8" cy="3.8" r="0.6" fill="#000"/><circle cx="9" cy="6.5" r="0.6" fill="#000"/><circle cx="10.5" cy="8.5" r="0.5" fill="#000"/><g transform="translate(0 2)"><path d="M12.500 10L20.500 9L24 20L22 23L11.500 18.500z" fill="url(#gSp)" stroke="#1c5c08" stroke-width=".8" stroke-linejoin="round"/><path d="M12.800 9.500L20.500 8.500L20.200 6.800L13 7.500z" fill="#f0c020"/><path d="M13.500 7L14 4.500Q17 2 19.500 4.500L20 6.500z" fill="#f4f4f4" stroke="#444" stroke-width=".9"/></g></svg>
<svg class="b" style="left:7px;top:535px" width="24" height="24" viewBox="0 0 24 24"><linearGradient id="gEr" x1="0" y1="0" x2="1" y2="1"><stop offset="0" stop-color="#f5b8a4"/><stop offset="1" stop-color="#fff4f0"/></linearGradient><path d="M12.500 .3L22.400 6L12.500 22.700L3.200 16.500z" fill="url(#gEr)" stroke="#111" stroke-width="1.200" stroke-linejoin="round"/></svg>
<svg class="b" style="left:7px;top:565px" width="24" height="24" viewBox="0 0 24 24"><linearGradient id="gBk" x1="0" y1="0" x2="1" y2="1"><stop offset="0" stop-color="#b8dcf0"/><stop offset=".5" stop-color="#5f9cc8"/><stop offset="1" stop-color="#2a5a90"/></linearGradient><ellipse cx="11.500" cy="21.300" rx="10" ry="2.200" fill="#90d8a0" stroke="#2a7a40" stroke-width=".9"/><path d="M5 8C6 13 9 15 9.500 20.500H13C12 16 11 12 9 8z" fill="#90d8a0" stroke="#2a7a40" stroke-width=".8"/><path d="M4.300 7L18.900 .5C21 .3 23.500 4 23.500 11.600L10.200 17.400C8 12 5.500 9 4.300 7z" fill="url(#gBk)" stroke="#0a2a4a" stroke-width="1.100" stroke-linejoin="round"/><path d="M4.300 7C6 6.500 9.500 11 10.200 17.400" fill="none" stroke="#2a7a40" stroke-width="1.300"/><path d="M7.500 6L9.500 .8L11 1L12 11" fill="none" stroke="#555" stroke-width="1.100"/><circle cx="12" cy="11.500" r="1.200" fill="#ddd" stroke="#333" stroke-width=".7"/></svg>
<svg class="b" style="left:7px;top:595px" width="24" height="24" viewBox="0 0 24 24"><linearGradient id="gGr" x1="0" y1="0" x2="1" y2="1"><stop offset="0" stop-color="#58b058"/><stop offset=".3" stop-color="#eaf6ea"/><stop offset=".45" stop-color="#fff"/><stop offset="1" stop-color="#2f9a2f"/></linearGradient><rect x="2" y="1" width="21.500" height="21.500" fill="url(#gGr)"/><rect x="2" y="1" width="21.500" height="21.500" fill="none" stroke="#7cc47c" stroke-width="1"/><path d="M6.500 6.500L19 17.500" stroke="#222" stroke-width="1.300"/><rect x="4.300" y="4" width="4.700" height="4.700" rx="1" fill="#fff" stroke="#333" stroke-width="1.200"/><rect x="16.600" y="15" width="4.700" height="4.700" rx="1" fill="#fff" stroke="#333" stroke-width="1.200"/></svg>
<svg class="b" style="left:7px;top:625px" width="24" height="24" viewBox="0 0 24 24"><path d="M16.500 8.500L7 18L6.500 19.500L8 19L17.500 9.500z" fill="#8fb8e8" stroke="#1a2a4a" stroke-width="1"/><path d="M15 6.500L19.500 11" stroke="#000" stroke-width="2.600" stroke-linecap="round"/><path d="M17.500 7.500L22 3" stroke="#000" stroke-width="5.500" stroke-linecap="round"/><path d="M19.800 2L22.300 1.500" stroke="#555" stroke-width="1" stroke-linecap="round"/><path d="M6 20C4.500 22 5 23.500 6 23.500C7.200 23.500 7.500 22 6 20z" fill="#6f9fe0" stroke="#1a3a7a" stroke-width=".8"/></svg>
<svg class="b" style="left:7px;top:655px" width="24" height="24" viewBox="0 0 24 24"><path d="M14.500 3.500H19.500V17M8.500 7L5 17" fill="none" stroke="#000" stroke-width="1.100"/><rect x="6.3" y="0.8" width="7.7" height="6.7" fill="url(#gBlue)" stroke="#000" stroke-width="1.300"/><rect x="9.5" y="9.8" width="8" height="4.7" fill="#ffd020" stroke="#000" stroke-width="1.300"/><rect x="1.5" y="17" width="7.7" height="7" fill="url(#gBlue)" stroke="#000" stroke-width="1.300"/><rect x="16.8" y="17" width="7.7" height="7" fill="url(#gBlue)" stroke="#000" stroke-width="1.300"/></svg>
<div class="b" style="left:0px;top:115px;width:1px;height:20px;background:#964b1c"></div>
<div class="b" style="left:0px;top:295px;width:1px;height:19px;background:#964b1c"></div>
<div class="b" style="left:0px;top:541px;width:1px;height:20px;background:#964b1c"></div>
<div class="b" style="left:0px;top:567px;width:1px;height:20px;background:#964b1c"></div>
<svg class="b" style="left:0;top:113px" width="1280" height="15" viewBox="0 0 1280 15"><path d="M62.5 12V15M71.5 0V15M79.5 12V15M88.5 9V15M97.5 12V15M106.5 9V15M114.5 12V15M123.5 9V15M132.5 12V15M141.5 9V15M149.5 12V15M158.5 0V15M167.5 12V15M176.5 9V15M184.5 12V15M193.5 9V15M202.5 12V15M211.5 9V15M219.5 12V15M228.5 9V15M237.5 12V15M246.5 0V15M254.5 12V15M263.5 9V15M272.5 12V15M281.5 9V15M289.5 12V15M298.5 9V15M307.5 12V15M316.5 9V15M324.5 12V15M333.5 0V15M342.5 12V15M351.5 9V15M359.5 12V15M368.5 9V15M377.5 12V15M386.5 9V15M394.5 12V15M403.5 9V15M412.5 12V15M421.5 0V15M429.5 12V15M438.5 9V15M447.5 12V15M456.5 9V15M464.5 12V15M473.5 9V15M482.5 12V15M491.5 9V15M499.5 12V15M508.5 0V15M517.5 12V15M526.5 9V15M534.5 12V15M543.5 9V15M552.5 12V15M561.5 9V15M569.5 12V15M578.5 9V15M587.5 12V15M596.5 0V15M604.5 12V15M613.5 9V15M622.5 12V15M631.5 9V15M639.5 12V15M648.5 9V15M657.5 12V15M666.5 9V15M674.5 12V15M683.5 0V15M692.5 12V15M701.5 9V15M709.5 12V15M718.5 9V15M727.5 12V15M736.5 9V15M744.5 12V15M753.5 9V15M762.5 12V15M771.5 0V15M779.5 12V15M788.5 9V15M797.5 12V15M806.5 9V15M814.5 12V15M823.5 9V15M832.5 12V15M841.5 9V15M849.5 12V15M858.5 0V15M867.5 12V15M876.5 9V15M884.5 12V15M893.5 9V15M902.5 12V15M911.5 9V15M919.5 12V15M928.5 9V15M937.5 12V15M946.5 0V15M954.5 12V15M963.5 9V15M972.5 12V15M981.5 9V15M989.5 12V15M998.5 9V15M1007.5 12V15M1016.5 9V15M1024.5 12V15M1033.5 0V15M1042.5 12V15M1051.5 9V15M1059.5 12V15M1068.5 9V15M1077.5 12V15M1086.5 9V15M1094.5 12V15M1103.5 9V15M1112.5 12V15M1121.5 0V15M1129.5 12V15M1138.5 9V15M1147.5 12V15M1156.5 9V15M1164.5 12V15M1173.5 9V15M1182.5 12V15M1191.5 9V15M1199.5 12V15M1208.5 0V15M1217.5 12V15" stroke="#000" stroke-width="1" fill="none" shape-rendering="crispEdges"/></svg>
<span id="t21" class="t" style="left:73.5px;top:109.66px;font-size:7.5px;line-height:11.5px;color:#4f4b47;letter-spacing:-0.277px;">-1250</span>
<span id="t22" class="t" style="left:160.5px;top:109.66px;font-size:7.5px;line-height:11.5px;color:#4f4b47;letter-spacing:-0.277px;">-1000</span>
<span id="t23" class="t" style="left:248.5px;top:109.66px;font-size:7.5px;line-height:11.5px;color:#4f4b47;letter-spacing:-0.271px;">-750</span>
<span id="t24" class="t" style="left:335.5px;top:109.66px;font-size:7.5px;line-height:11.5px;color:#4f4b47;letter-spacing:-0.271px;">-500</span>
<span id="t25" class="t" style="left:423.5px;top:109.66px;font-size:7.5px;line-height:11.5px;color:#4f4b47;letter-spacing:-0.271px;">-250</span>
<span id="t26" class="t" style="left:510.5px;top:109.66px;font-size:7.5px;line-height:11.5px;color:#4f4b47;letter-spacing:0.000px;">0</span>
<span id="t27" class="t" style="left:598.5px;top:109.66px;font-size:7.5px;line-height:11.5px;color:#4f4b47;letter-spacing:-0.695px;">250</span>
<span id="t28" class="t" style="left:685.5px;top:109.66px;font-size:7.5px;line-height:11.5px;color:#4f4b47;letter-spacing:-0.695px;">500</span>
<span id="t29" class="t" style="left:773.5px;top:109.66px;font-size:7.5px;line-height:11.5px;color:#4f4b47;letter-spacing:-0.695px;">750</span>
<span id="t30" class="t" style="left:860.5px;top:109.66px;font-size:7.5px;line-height:11.5px;color:#4f4b47;letter-spacing:-0.557px;">1000</span>
<span id="t31" class="t" style="left:948.5px;top:109.66px;font-size:7.5px;line-height:11.5px;color:#4f4b47;letter-spacing:-0.557px;">1250</span>
<span id="t32" class="t" style="left:1035.5px;top:109.66px;font-size:7.5px;line-height:11.5px;color:#4f4b47;letter-spacing:-0.557px;">1500</span>
<span id="t33" class="t" style="left:1123.5px;top:109.66px;font-size:7.5px;line-height:11.5px;color:#4f4b47;letter-spacing:-0.557px;">1750</span>
<span id="t34" class="t" style="left:1210.5px;top:109.66px;font-size:7.5px;line-height:11.5px;color:#4f4b47;letter-spacing:-0.703px;">2k</span>
<svg class="b" style="left:40px;top:0" width="14" height="772" viewBox="0 0 14 772"><path d="M1 675.5H14M12 666.5H14M9 657.5H14M12 648.5H14M9 640.5H14M12 631.5H14M9 622.5H14M12 613.5H14M9 605.5H14M12 596.5H14M1 587.5H14M12 578.5H14M9 570.5H14M12 561.5H14M9 552.5H14M12 543.5H14M9 535.5H14M12 526.5H14M9 517.5H14M12 508.5H14M1 500.5H14M12 491.5H14M9 482.5H14M12 473.5H14M9 465.5H14M12 456.5H14M9 447.5H14M12 438.5H14M9 430.5H14M12 421.5H14M1 412.5H14M12 403.5H14M9 395.5H14M12 386.5H14M9 377.5H14M12 368.5H14M9 360.5H14M12 351.5H14M9 342.5H14M12 333.5H14M1 325.5H14M12 316.5H14M9 307.5H14M12 298.5H14M9 290.5H14M12 281.5H14M9 272.5H14M12 263.5H14M9 255.5H14M12 246.5H14M1 237.5H14M12 228.5H14M9 220.5H14M12 211.5H14M9 202.5H14M12 193.5H14M9 185.5H14M12 176.5H14M9 167.5H14M12 158.5H14M1 150.5H14M12 141.5H14M9 132.5H14" stroke="#000" stroke-width="1" fill="none" shape-rendering="crispEdges"/></svg>
<span id="t35" class="t" style="left:41.3px;top:587.65px;font-size:7.5px;line-height:11.5px;color:#4f4b47;letter-spacing:0.000px;">0</span>
<span id="t36" class="t" style="left:41.3px;top:500.65px;font-size:7.5px;line-height:11.5px;color:#4f4b47;letter-spacing:0.000px;">2</span>
<span id="t37" class="t" style="left:41.3px;top:508.65px;font-size:7.5px;line-height:11.5px;color:#4f4b47;letter-spacing:0.000px;">5</span>
<span id="t38" class="t" style="left:41.3px;top:516.65px;font-size:7.5px;line-height:11.5px;color:#4f4b47;letter-spacing:0.000px;">0</span>
<span id="t39" class="t" style="left:41.3px;top:412.65px;font-size:7.5px;line-height:11.5px;color:#4f4b47;letter-spacing:0.000px;">5</span>
<span id="t40" class="t" style="left:41.3px;top:420.65px;font-size:7.5px;line-height:11.5px;color:#4f4b47;letter-spacing:0.000px;">0</span>
<span id="t41" class="t" style="left:41.3px;top:428.65px;font-size:7.5px;line-height:11.5px;color:#4f4b47;letter-spacing:0.000px;">0</span>
<span id="t42" class="t" style="left:41.3px;top:325.65px;font-size:7.5px;line-height:11.5px;color:#4f4b47;letter-spacing:0.000px;">7</span>
<span id="t43" class="t" style="left:41.3px;top:333.65px;font-size:7.5px;line-height:11.5px;color:#4f4b47;letter-spacing:0.000px;">5</span>
<span id="t44" class="t" style="left:41.3px;top:341.65px;font-size:7.5px;line-height:11.5px;color:#4f4b47;letter-spacing:0.000px;">0</span>
<span id="t45" class="t" style="left:41.3px;top:237.66px;font-size:7.5px;line-height:11.5px;color:#4f4b47;letter-spacing:0.000px;">1</span>
<span id="t46" class="t" style="left:41.3px;top:245.66px;font-size:7.5px;line-height:11.5px;color:#4f4b47;letter-spacing:0.000px;">0</span>
<span id="t47" class="t" style="left:41.3px;top:253.66px;font-size:7.5px;line-height:11.5px;color:#4f4b47;letter-spacing:0.000px;">0</span>
<span id="t48" class="t" style="left:41.3px;top:261.65px;font-size:7.5px;line-height:11.5px;color:#4f4b47;letter-spacing:0.000px;">0</span>
<span id="t49" class="t" style="left:41.3px;top:150.66px;font-size:7.5px;line-height:11.5px;color:#4f4b47;letter-spacing:0.000px;">1</span>
<span id="t50" class="t" style="left:41.3px;top:158.66px;font-size:7.5px;line-height:11.5px;color:#4f4b47;letter-spacing:0.000px;">2</span>
<span id="t51" class="t" style="left:41.3px;top:166.66px;font-size:7.5px;line-height:11.5px;color:#4f4b47;letter-spacing:0.000px;">5</span>
<span id="t52" class="t" style="left:41.3px;top:174.66px;font-size:7.5px;line-height:11.5px;color:#4f4b47;letter-spacing:0.000px;">0</span>
<svg class="b" style="left:949px;top:121px" width="7" height="4" viewBox="0 0 7 4"><path d="M0 0h7l-3.500 4.200z" fill="#000"/></svg>
<svg class="b" style="left:48px;top:493px" width="4" height="7" viewBox="0 0 4 7"><path d="M0 0v7l4.200-3.500z" fill="#000"/></svg>
<div class="b" style="left:54px;top:128px;width:1170px;height:554px;background:#fff"></div>
<div class="b" style="left:508px;top:219px;width:263px;height:371px;background:#5f5f5f"></div>
<div class="b" style="left:508px;top:219px;width:261px;height:369px;background:#fff;border:1px solid #666"></div>
<div class="b" style="left:769px;top:219px;width:2px;height:2px;background:#fff"></div>
<div class="b" style="left:508px;top:588px;width:2px;height:2px;background:#fff"></div>
<div class="b" style="left:54px;top:685px;width:1170px;height:15px;border:1px solid #7d6f62;border-radius:4px;background:#cbc0b5;"></div>
<div class="b" style="left:54px;top:685px;width:15px;height:15px;border:1px solid #7d6f62;border-radius:4px 0 0 4px;background:linear-gradient(#ffffff,#f4f1ee 50%,#e9e4df);"></div>
<svg class="b" style="left:54px;top:685px" width="15" height="15" viewBox="0 0 15 15"><path d="M8.200 3.800V11.200L3.800 7.500z" fill="#707070"/></svg>
<div class="b" style="left:1209px;top:685px;width:15px;height:15px;border:1px solid #7d6f62;border-radius:0 4px 4px 0;background:linear-gradient(#ffffff,#f4f1ee 50%,#e9e4df);"></div>
<svg class="b" style="left:1209px;top:685px" width="15" height="15" viewBox="0 0 15 15"><path d="M6 3.800V11.200L10.300 7.500z" fill="#707070"/></svg>
<div class="b" style="left:69px;top:685px;width:1140px;height:15px;border:1px solid #7d6f62;background:linear-gradient(#faf8f6,#f1ede9 45%,#e6e0da 55%,#e4ded8);"></div>
<div class="b" style="left:70px;top:686px;width:5px;height:13px;background:rgba(255,255,255,.55);"></div>
<div class="b" style="left:1203px;top:686px;width:5px;height:13px;background:rgba(255,255,255,.55);"></div>
<div class="b" style="left:635px;top:689px;width:1px;height:7px;background:#b3a79c"></div>
<div class="b" style="left:636px;top:689px;width:1px;height:7px;background:#fff"></div>
<div class="b" style="left:638px;top:689px;width:1px;height:7px;background:#b3a79c"></div>
<div class="b" style="left:639px;top:689px;width:1px;height:7px;background:#fff"></div>
<div class="b" style="left:641px;top:689px;width:1px;height:7px;background:#b3a79c"></div>
<div class="b" style="left:642px;top:689px;width:1px;height:7px;background:#fff"></div>
<div class="b" style="left:3px;top:728px;width:1264px;height:15px;border:1px solid #7d6f62;border-radius:4px;background:#cbc0b5;"></div>
<div class="b" style="left:3px;top:728px;width:15px;height:15px;border:1px solid #7d6f62;border-radius:4px 0 0 4px;background:linear-gradient(#ffffff,#f4f1ee 50%,#e9e4df);"></div>
<svg class="b" style="left:3px;top:728px" width="15" height="15" viewBox="0 0 15 15"><path d="M8.200 3.800V11.200L3.800 7.500z" fill="#707070"/></svg>
<div class="b" style="left:1252px;top:728px;width:15px;height:15px;border:1px solid #7d6f62;border-radius:0 4px 4px 0;background:linear-gradient(#ffffff,#f4f1ee 50%,#e9e4df);"></div>
<svg class="b" style="left:1252px;top:728px" width="15" height="15" viewBox="0 0 15 15"><path d="M6 3.800V11.200L10.300 7.500z" fill="#000"/></svg>
<div class="b" style="left:18px;top:728px;width:189px;height:15px;border:1px solid #7d6f62;background:linear-gradient(#faf8f6,#f1ede9 45%,#e6e0da 55%,#e4ded8);"></div>
<div class="b" style="left:19px;top:729px;width:5px;height:13px;background:rgba(255,255,255,.55);"></div>
<div class="b" style="left:201px;top:729px;width:5px;height:13px;background:rgba(255,255,255,.55);"></div>
<div class="b" style="left:108px;top:732px;width:1px;height:7px;background:#b3a79c"></div>
<div class="b" style="left:109px;top:732px;width:1px;height:7px;background:#fff"></div>
<div class="b" style="left:111px;top:732px;width:1px;height:7px;background:#b3a79c"></div>
<div class="b" style="left:112px;top:732px;width:1px;height:7px;background:#fff"></div>
<div class="b" style="left:114px;top:732px;width:1px;height:7px;background:#b3a79c"></div>
<div class="b" style="left:115px;top:732px;width:1px;height:7px;background:#fff"></div>
<div class="b" style="left:1227px;top:132px;width:15px;height:550px;border:1px solid #7d6f62;border-radius:4px;background:#cbc0b5;"></div>
<div class="b" style="left:1227px;top:132px;width:15px;height:15px;border:1px solid #7d6f62;border-radius:4px 4px 0 0;background:linear-gradient(90deg,#ffffff,#f4f1ee 50%,#e9e4df);"></div>
<svg class="b" style="left:1227px;top:132px" width="15" height="15" viewBox="0 0 15 15"><path d="M3.800 9.200H11.200L7.500 4.800z" fill="#000"/></svg>
<div class="b" style="left:1227px;top:667px;width:15px;height:15px;border:1px solid #7d6f62;border-radius:0 0 4px 4px;background:linear-gradient(90deg,#ffffff,#f4f1ee 50%,#e9e4df);"></div>
<svg class="b" style="left:1227px;top:667px" width="15" height="15" viewBox="0 0 15 15"><path d="M3.800 6H11.200L7.500 10.300z" fill="#000"/></svg>
<div class="b" style="left:1227px;top:291px;width:15px;height:232px;border:1px solid #7d6f62;background:linear-gradient(90deg,#faf8f6,#f1ede9 45%,#e6e0da 55%,#e4ded8);"></div>
<div class="b" style="left:1228px;top:292px;width:13px;height:5px;background:rgba(255,255,255,.55);"></div>
<div class="b" style="left:1228px;top:517px;width:13px;height:5px;background:rgba(255,255,255,.55);"></div>
<div class="b" style="left:1231px;top:403px;width:7px;height:1px;background:#b3a79c"></div>
<div class="b" style="left:1231px;top:404px;width:7px;height:1px;background:#fff"></div>
<div class="b" style="left:1231px;top:406px;width:7px;height:1px;background:#b3a79c"></div>
<div class="b" style="left:1231px;top:407px;width:7px;height:1px;background:#fff"></div>
<div class="b" style="left:1231px;top:409px;width:7px;height:1px;background:#b3a79c"></div>
<div class="b" style="left:1231px;top:410px;width:7px;height:1px;background:#fff"></div>
<svg class="b" style="left:1227px;top:113px" width="16" height="16" viewBox="0 0 16 16"><path d="M12.300 12.300L14.300 14.300" stroke="#000" stroke-width="2.600" stroke-linecap="round"/><circle cx="7.500" cy="7.300" r="6.800" fill="url(#gLens)" stroke="#000" stroke-width="1.400"/><text x="7.300" y="11" font-family="'Liberation Sans','DejaVu Sans',sans-serif" font-weight="bold" font-size="10.500" text-anchor="middle" fill="#000" textLength="10" lengthAdjust="spacingAndGlyphs">1:1</text></svg>
<svg class="b" style="left:1229px;top:685px" width="16" height="16" viewBox="0 0 16 16"><linearGradient id="gC1" x1="0" y1="0" x2="0" y2="1"><stop offset="0" stop-color="#10b010"/><stop offset=".5" stop-color="#30b0a0"/><stop offset="1" stop-color="#1010d0"/></linearGradient><linearGradient id="gC2" x1="0" y1="0" x2="1" y2="0"><stop offset=".2" stop-color="#e01010" stop-opacity="0"/><stop offset="1" stop-color="#e01010"/></linearGradient><g opacity=".3"><path d="M1 0Q8.500 3 12.800 10.500L2.300 16z" fill="#333"/></g><g mask="url(#mChk)"><path d="M1 0Q8.500 3 12.800 10.500L2.300 16z" fill="url(#gC1)"/><path d="M1 0Q8.500 3 12.800 10.500L2.300 16z" fill="url(#gC2)"/></g></svg>
<div class="b" style="left:1251px;top:110px;width:1px;height:594px;background:#d9cfc7"></div>
<div class="b" style="left:1252px;top:110px;width:1px;height:594px;background:#f8f6f4"></div>
<div class="b" style="left:1255px;top:113px;width:30px;height:24px;border:1px solid #964b1c;border-radius:4px;background:linear-gradient(#e2ddd8 0%,#ddd7d1 45%,#d3ccc5 55%,#dbd5cf 100%);box-shadow:0 0 0 1px rgba(255,255,255,.6);"></div>
<svg class="b" style="left:1260px;top:118px" width="16" height="16" viewBox="0 0 16 16"><path d="M5 5L11.500 11.500" stroke="#000" stroke-width="1.300"/><path d="M13 13L8.500 11.800L11.800 8.500z" fill="#000"/><path d="M4 0.7000000000000002L6.3 3L4 5.3L1.7000000000000002 3z" fill="#b8b8ff" stroke="#1c1cff" stroke-width="1.4"/><path d="M14 10.7L16.3 13L14 15.3L11.7 13z" fill="#c8c8e8" stroke="#1c8a1c" stroke-width="1.4"/></svg>
<div class="b" style="left:1260px;top:143px;width:16px;height:1px;background:#d9cfc7"></div>
<div class="b" style="left:1260px;top:144px;width:16px;height:1px;background:#fdfcfb"></div>
<svg class="b" style="left:1260px;top:154px" width="16" height="16" viewBox="0 0 16 16"><path d="M5 4H16" stroke="#333" stroke-width="1.400" stroke-dasharray="2 1"/><path d="M3.500 6V16" stroke="#333" stroke-width="1.200" stroke-dasharray="2 1"/><path d="M3.4 1.7000000000000002L5.699999999999999 4L3.4 6.3L1.1 4z" fill="#8080ff" stroke="#1c1cff" stroke-width="1.4"/></svg>
<svg class="b" style="left:1260px;top:181px" width="16" height="16" viewBox="0 0 16 16"><path d="M0 13.500H13M13 0V13" stroke="#3f8f3f" stroke-opacity=".8" stroke-width="1.300" stroke-dasharray="1.500 1.500" fill="none"/></svg>
<svg class="b" style="left:1260px;top:207px" width="16" height="16" viewBox="0 0 16 16"><path d="M0 13H10" stroke="#555" stroke-width="1.100" stroke-dasharray="1.500 1.500"/><path d="M13 0V9" stroke="#4a6a4a" stroke-width="1.100" stroke-dasharray="1.500 1.500"/><g mask="url(#mChk)"><path d="M13 10.2L15.8 13L13 15.8L10.2 13z" fill="#2f8a2f" stroke="#1c5c1c" stroke-width="1.2"/></g></svg>
<svg class="b" style="left:1260px;top:232px" width="16" height="16" viewBox="0 0 16 16"><path d="M.5 13.500H12" stroke="#333" stroke-width="1.100" stroke-dasharray="2 1"/><path d="M13 8V14" stroke="#666" stroke-width="1.100" stroke-dasharray="1 1"/><g mask="url(#mChk)"><path d="M13 2.5L15.5 5L13 7.5L10.5 5z" fill="#2f8a2f" stroke="#1c5c1c" stroke-width="1.2"/></g></svg>
<svg class="b" style="left:1260px;top:257px" width="16" height="16" viewBox="0 0 16 16"><path d="M0 14.500H13" stroke="#333" stroke-width="1.100" stroke-dasharray="2 1"/><path d="M13 2V15" stroke="#444" stroke-width="1.100" stroke-dasharray="2 1"/><path d="M3.600 4L5.600 6L3.600 8L1.600 6z" fill="#d8e8d8" stroke="#4a8a4a" stroke-width="1"/></svg>
<div class="b" style="left:1260px;top:285px;width:16px;height:1px;background:#d9cfc7"></div>
<div class="b" style="left:1260px;top:286px;width:16px;height:1px;background:#fdfcfb"></div>
<div class="b" style="left:1255px;top:293px;width:30px;height:24px;border:1px solid #964b1c;border-radius:4px;background:linear-gradient(#e2ddd8 0%,#ddd7d1 45%,#d3ccc5 55%,#dbd5cf 100%);box-shadow:0 0 0 1px rgba(255,255,255,.6);"></div>
<svg class="b" style="left:1260px;top:297px" width="16" height="16" viewBox="0 0 16 16"><path d="M2 10C3 7 5.500 5 8 5.500C4.500 9 8 14 16 16" fill="none" stroke="#666" stroke-width="1.300"/><path d="M9 1.4L11.6 4L9 6.6L6.4 4z" fill="#6060ff" stroke="#1c1cff" stroke-width="1.3"/></svg>
<svg class="b" style="left:1260px;top:323px" width="16" height="16" viewBox="0 0 16 16"><path d="M1 2C7 2 10.500 6 10 12" fill="none" stroke="#1c8a1c" stroke-width="1.700"/><path d="M7.500 13.500C11 13.500 14 11.500 15 8" fill="none" stroke="#1c8a1c" stroke-width="1.700"/></svg>
<svg class="b" style="left:1260px;top:349px" width="16" height="16" viewBox="0 0 16 16"><path d="M1 14.500L15 1.500" stroke="#222" stroke-width="1.100"/><path d="M1 9.500L15 6.500" stroke="#888" stroke-width=".8"/><path d="M8 5.8L10.2 8L8 10.2L5.8 8z" fill="#9c9ce0" stroke="#2f7a2f" stroke-width="1.1"/></svg>
<svg class="b" style="left:1260px;top:375px" width="16" height="16" viewBox="0 0 16 16"><path d="M1 1.500C7 2 10.500 6 10 11" fill="none" stroke="#444" stroke-width="1.200"/><path d="M8 13C11 12.500 14 11.500 15 8" fill="none" stroke="#444" stroke-width="1.200"/><path d="M8 10.6L10.4 13L8 15.4L5.6 13z" fill="#9c9ce8" stroke="#1c8a1c" stroke-width="1.5"/></svg>
<svg class="b" style="left:1260px;top:401px" width="16" height="16" viewBox="0 0 16 16"><path d="M1 1C4 1.500 9 3 10 10" fill="none" stroke="#444" stroke-width="1.200"/><path d="M7.500 12.500C11 12.500 14 11.500 15 7.500" fill="none" stroke="#444" stroke-width="1.200"/><rect x="5.500" y="1.500" width="4" height="4" fill="#9c9ce8" stroke="#1c8a1c" stroke-width="1.500"/></svg>
<svg class="b" style="left:1260px;top:427px" width="16" height="16" viewBox="0 0 16 16"><path d="M1 14.500L15.500 1" stroke="#222" stroke-width="1"/><path d="M1.500 11L3.500 16M3 10L5 15M11 3L13 8M12.500 1.500L14.500 6.500" stroke="#e01010" stroke-width="1"/><circle cx="8" cy="8" r="2.100" fill="#7070d0" stroke="#1c8a1c" stroke-width="1.300"/></svg>
<svg class="b" style="left:1260px;top:453px" width="16" height="16" viewBox="0 0 16 16"><path d="M0 13.500H13V0" fill="none" stroke="#777" stroke-width="1.400"/><circle cx="5" cy="5.500" r="1.800" fill="#b8d8b8" stroke="#1c9a1c" stroke-width="1.400"/></svg>
<svg class="b" style="left:1260px;top:479px" width="16" height="16" viewBox="0 0 16 16"><path d="M0 13.500H12.500" stroke="#333" stroke-width="1.400" stroke-dasharray="2 1"/><path d="M12.700 0V13" stroke="#333" stroke-width="1.200" stroke-dasharray="2 1"/><path d="M1.500 5.500H8.500M5 2V9" stroke="#333" stroke-width="1.400"/></svg>
<div class="b" style="left:1260px;top:505px;width:16px;height:1px;background:#d9cfc7"></div>
<div class="b" style="left:1260px;top:506px;width:16px;height:1px;background:#fdfcfb"></div>
<svg class="b" style="left:1260px;top:517px" width="16" height="16" viewBox="0 0 16 16"><rect x="2.700" y=".7" width="10" height="13.600" fill="url(#gPage)" stroke="#000" stroke-width="1.400"/></svg>
<div class="b" style="left:1255px;top:539px;width:30px;height:24px;border:1px solid #964b1c;border-radius:4px;background:linear-gradient(#e2ddd8 0%,#ddd7d1 45%,#d3ccc5 55%,#dbd5cf 100%);box-shadow:0 0 0 1px rgba(255,255,255,.6);"></div>
<svg class="b" style="left:1260px;top:543px" width="18" height="18" viewBox="0 0 18 18"><rect x="1" y="1" width="16" height="16" fill="#f2e8c0"/><path d="M2.500 .5V17.500M6.700 .5V17.500M11 .5V17.500M15.400 .5V17.500M.5 3H17.500M.5 7H17.500M.5 11.500H17.500M.5 15.800H17.500" stroke="#1010ff" stroke-width="1.400"/></svg>
<div class="b" style="left:1255px;top:565px;width:30px;height:24px;border:1px solid #964b1c;border-radius:4px;background:linear-gradient(#e2ddd8 0%,#ddd7d1 45%,#d3ccc5 55%,#dbd5cf 100%);box-shadow:0 0 0 1px rgba(255,255,255,.6);"></div>
<svg class="b" style="left:1260px;top:569px" width="18" height="18" viewBox="0 0 18 18"><path d="M2.500 0V17M15.200 0V17M8 17L14.500 0" stroke="#1010ff" stroke-width="1.400" fill="none"/></svg>
<svg class="b" style="left:0;top:705px;overflow:hidden" width="1265" height="20" viewBox="0 0 1265 20" shape-rendering="crispEdges"><rect x="24" y="0" width="19" height="20" fill="#000000"/><rect x="43" y="0" width="19" height="20" fill="#1a1a1a"/><rect x="62" y="0" width="19" height="20" fill="#333333"/><rect x="81" y="0" width="19" height="20" fill="#4d4d4d"/><rect x="100" y="0" width="19" height="20" fill="#666666"/><rect x="119" y="0" width="19" height="20" fill="#808080"/><rect x="138" y="0" width="19" height="20" fill="#999999"/><rect x="157" y="0" width="19" height="20" fill="#b3b3b3"/><rect x="176" y="0" width="19" height="20" fill="#cccccc"/><rect x="195" y="0" width="19" height="20" fill="#e6e6e6"/><rect x="214" y="0" width="19" height="20" fill="#ececec"/><rect x="233" y="0" width="19" height="20" fill="#f2f2f2"/><rect x="252" y="0" width="19" height="20" fill="#f9f9f9"/><rect x="271" y="0" width="19" height="20" fill="#ffffff"/><rect x="290" y="0" width="19" height="20" fill="#800000"/><rect x="309" y="0" width="19" height="20" fill="#ff0000"/><rect x="328" y="0" width="19" height="20" fill="#808000"/><rect x="347" y="0" width="19" height="20" fill="#ffff00"/><rect x="366" y="0" width="19" height="20" fill="#008000"/><rect x="385" y="0" width="19" height="20" fill="#00ff00"/><rect x="404" y="0" width="19" height="20" fill="#008080"/><rect x="423" y="0" width="19" height="20" fill="#00ffff"/><rect x="442" y="0" width="19" height="20" fill="#000080"/><rect x="461" y="0" width="19" height="20" fill="#0000ff"/><rect x="480" y="0" width="19" height="20" fill="#800080"/><rect x="499" y="0" width="19" height="20" fill="#ff00ff"/><rect x="518" y="0" width="19" height="20" fill="#2b0000"/><rect x="537" y="0" width="19" height="20" fill="#550000"/><rect x="556" y="0" width="19" height="20" fill="#800000"/><rect x="575" y="0" width="19" height="20" fill="#aa0000"/><rect x="594" y="0" width="19" height="20" fill="#d40000"/><rect x="613" y="0" width="19" height="20" fill="#ff0000"/><rect x="632" y="0" width="19" height="20" fill="#ff2a2a"/><rect x="651" y="0" width="19" height="20" fill="#ff5555"/><rect x="670" y="0" width="19" height="20" fill="#ff8080"/><rect x="689" y="0" width="19" height="20" fill="#ffaaaa"/><rect x="708" y="0" width="19" height="20" fill="#ffd5d5"/><rect x="727" y="0" width="19" height="20" fill="#280b0b"/><rect x="746" y="0" width="19" height="20" fill="#501616"/><rect x="765" y="0" width="19" height="20" fill="#782121"/><rect x="784" y="0" width="19" height="20" fill="#a02c2c"/><rect x="803" y="0" width="19" height="20" fill="#c83737"/><rect x="822" y="0" width="19" height="20" fill="#d35f5f"/><rect x="841" y="0" width="19" height="20" fill="#de8787"/><rect x="860" y="0" width="19" height="20" fill="#e9afaf"/><rect x="879" y="0" width="19" height="20" fill="#f4d7d7"/><rect x="898" y="0" width="19" height="20" fill="#241c1c"/><rect x="917" y="0" width="19" height="20" fill="#483737"/><rect x="936" y="0" width="19" height="20" fill="#6c5353"/><rect x="955" y="0" width="19" height="20" fill="#916f6f"/><rect x="974" y="0" width="19" height="20" fill="#ac9393"/><rect x="993" y="0" width="19" height="20" fill="#c8b7b7"/><rect x="1012" y="0" width="19" height="20" fill="#e3dbdb"/><rect x="1031" y="0" width="19" height="20" fill="#2b1100"/><rect x="1050" y="0" width="19" height="20" fill="#552200"/><rect x="1069" y="0" width="19" height="20" fill="#803300"/><rect x="1088" y="0" width="19" height="20" fill="#aa4400"/><rect x="1107" y="0" width="19" height="20" fill="#d45500"/><rect x="1126" y="0" width="19" height="20" fill="#ff6600"/><rect x="1145" y="0" width="19" height="20" fill="#ff7f2a"/><rect x="1164" y="0" width="19" height="20" fill="#ff9955"/><rect x="1183" y="0" width="19" height="20" fill="#ffb380"/><rect x="1202" y="0" width="19" height="20" fill="#ffccaa"/><rect x="1221" y="0" width="19" height="20" fill="#ffe6d5"/><rect x="1240" y="0" width="19" height="20" fill="#28170b"/><rect x="1259" y="0" width="19" height="20" fill="#502d16"/><rect x="4" y="0" width="1261" height="1" fill="#000"/><rect x="4" y="0" width="1" height="20" fill="#000"/><rect x="5" y="1" width="19" height="19" fill="#fff"/><path d="M5 1l19 19M24 1L5 20" stroke="#8a0f0f" stroke-width="2" shape-rendering="auto"/></svg>
<div class="b" style="left:4px;top:725px;width:1263px;height:1px;background:#fbfaf9"></div>
<div class="b" style="left:1265px;top:706px;width:2px;height:20px;background:#fbfaf9"></div>
<div class="b" style="left:1265px;top:705px;width:2px;height:1px;background:#000"></div>
<svg class="b" style="left:1272px;top:708px" width="5" height="8" viewBox="0 0 5 8"><path d="M4.500 0V7.500L0 3.750z" fill="#000"/></svg>
<span id="t53" class="t" style="left:4.3px;top:743.69px;font-size:11px;line-height:15px;color:#000;letter-spacing:-0.428px;">Remplissage :</span>
<span id="t54" class="t" style="left:4.3px;top:757.69px;font-size:11px;line-height:15px;color:#000;letter-spacing:-0.312px;">Contour :</span>
<span id="t55" class="t" style="left:88px;top:743.69px;font-size:11px;line-height:15px;color:#000;letter-spacing:0.242px;">N/A</span>
<span id="t56" class="t" style="left:88px;top:757.69px;font-size:11px;line-height:15px;color:#000;letter-spacing:0.242px;">N/A</span>
<span id="t57" class="t" style="left:125.7px;top:750.69px;font-size:11px;line-height:15px;color:#000;letter-spacing:-0.283px;">O :</span>
<div class="b" style="left:143px;top:747px;width:27px;height:21px;border:1px solid #a0978a;background:#efebe7;box-shadow:inset 0 0 0 1px #fbfaf8;"></div>
<span id="t58" class="t" style="left:147px;top:750.69px;font-size:11px;line-height:15px;color:#b5afa8;letter-spacing:-0.795px;text-shadow:1px 1px 0 #fff;">100</span>
<div class="b" style="left:170px;top:748px;width:10px;height:10px;border:1px solid #ab957f;background:linear-gradient(#fdfcfb,#ece8e3);box-shadow:inset 0 0 0 1px #fff;"></div>
<div class="b" style="left:170px;top:757px;width:10px;height:10px;border:1px solid #ab957f;background:linear-gradient(#fdfcfb,#ece8e3);box-shadow:inset 0 0 0 1px #fff;"></div>
<svg class="b" style="left:170px;top:748px" width="10" height="19" viewBox="0 0 10 19"><path d="M2 7L5 3.5L8 7z M2 12.5L5 16L8 12.5z" fill="#777"/></svg>
<div class="b" style="left:184px;top:745px;width:1px;height:27px;background:#d9cfc7"></div>
<div class="b" style="left:185px;top:745px;width:1px;height:27px;background:#fdfcfb"></div>
<svg class="b" style="left:188px;top:749px" width="18" height="16" viewBox="0 0 18 16"><path d="M1 9.500C4 5 13 4 16.500 9.500C13 15 4.500 15.500 1 9.500z" fill="#eee" stroke="#000" stroke-width="1.200"/><path d="M2 9C5 5.500 12 5 15.500 8.500" fill="none" stroke="#888" stroke-width="1"/><circle cx="9" cy="9.800" r="3.200" fill="#000"/><circle cx="8" cy="8.500" r="1" fill="#fff" fill-opacity=".7"/><path d="M2.500 7L1.500 5.200M5.500 5.500L4.300 2M9.300 4.800V1M12.200 5.500L13.500 2.800M15 7L16.300 5.800" stroke="#000" stroke-width="1.200" stroke-linecap="round"/></svg>
<svg class="b" style="left:211px;top:750px" width="16" height="16" viewBox="0 0 16 16"><path d="M4 1.600C6 -.6 10.800 -.8 11.800 5.800" fill="none" stroke="#111" stroke-width="1.400" stroke-linecap="round"/><path d="M2 7.200L12.600 5.800L13.800 13.600L3.300 15.800z" fill="url(#gUl)" stroke="#000" stroke-width="1.400" stroke-linejoin="round"/><path d="M7.300 9.300L9.300 9L8.900 12L8 11.800z" fill="#000" stroke="#000" stroke-width=".6"/></svg>
<div class="b" style="left:230px;top:745px;width:86px;height:27px;border:1px solid #9a917f;background:#fff;"></div>
<div class="b" style="left:295px;top:746px;width:21px;height:26px;border:1px solid #6f6453;box-shadow:inset -1px -1px 0 #8a7f6e;background:linear-gradient(#f8f6f3,#f1eeea 50%,#e8e3dd 52%,#e9e5df);"></div>
<svg class="b" style="left:295px;top:746px" width="21" height="26" viewBox="0 0 21 26"><path d="M6 11.500l3.500-3.500L13 11.500z M6 14l3.500 3.500L13 14z" fill="#000"/></svg>
<span id="t59" class="t" style="left:236.8px;top:749.69px;font-size:11px;line-height:15px;color:#000;font-weight:bold;letter-spacing:-0.833px;">·Calque 1</span>
<span id="t60" class="t" style="left:320px;top:750.69px;font-size:11px;line-height:15px;color:#000;letter-spacing:-0.177px;">Aucun objet sélectionné. Sélectionnez des objets par Clic, Maj+Clic ou cliquer-déplacer.</span>
<div class="b" style="left:1115px;top:745px;width:1px;height:27px;background:#d9cfc7"></div>
<div class="b" style="left:1116px;top:745px;width:1px;height:27px;background:#fdfcfb"></div>
<span id="t61" class="t" style="left:1119px;top:744.54px;font-size:10px;line-height:14px;color:#000;font-family:'DejaVu Sans Mono','Liberation Mono',monospace;font-stretch:normal;letter-spacing:0.000px;letter-spacing:1.22px;">X:1268,57</span>
<span id="t62" class="t" style="left:1119px;top:758.54px;font-size:10px;line-height:14px;color:#000;font-family:'DejaVu Sans Mono','Liberation Mono',monospace;font-stretch:normal;letter-spacing:0.000px;letter-spacing:1.22px;">Y: 260,00</span>
<span id="t63" class="t" style="left:1191.7px;top:750.69px;font-size:11px;line-height:15px;color:#000;letter-spacing:-0.633px;">Z :</span>
<div class="b" style="left:1207px;top:747px;width:46px;height:21px;border:1px solid #a39684;background:#fff;box-shadow:inset 0 0 0 1px #fbfaf8;"></div>
<span id="t64" class="t" style="left:1216.9px;top:750.69px;font-size:11px;line-height:15px;color:#000;letter-spacing:0.000px;">35%</span>
<div class="b" style="left:1253px;top:748px;width:10px;height:10px;border:1px solid #ab957f;background:linear-gradient(#fdfcfb,#ece8e3);box-shadow:inset 0 0 0 1px #fff;"></div>
<div class="b" style="left:1253px;top:757px;width:10px;height:10px;border:1px solid #ab957f;background:linear-gradient(#fdfcfb,#ece8e3);box-shadow:inset 0 0 0 1px #fff;"></div>
<svg class="b" style="left:1253px;top:748px" width="10" height="19" viewBox="0 0 10 19"><path d="M2 7L5 3.5L8 7z M2 12.5L5 16L8 12.5z" fill="#000"/></svg>
<svg class="b" style="left:1264px;top:756px" width="16" height="16" viewBox="0 0 16 16"><path d="M3 16L16 3M7 16L16 7M11 16L16 11" stroke="#c4bab0" stroke-width="1"/><path d="M4 16L16 4M8 16L16 8M12 16L16 12" stroke="#fff" stroke-width="1"/></svg>
</div></body></html>
